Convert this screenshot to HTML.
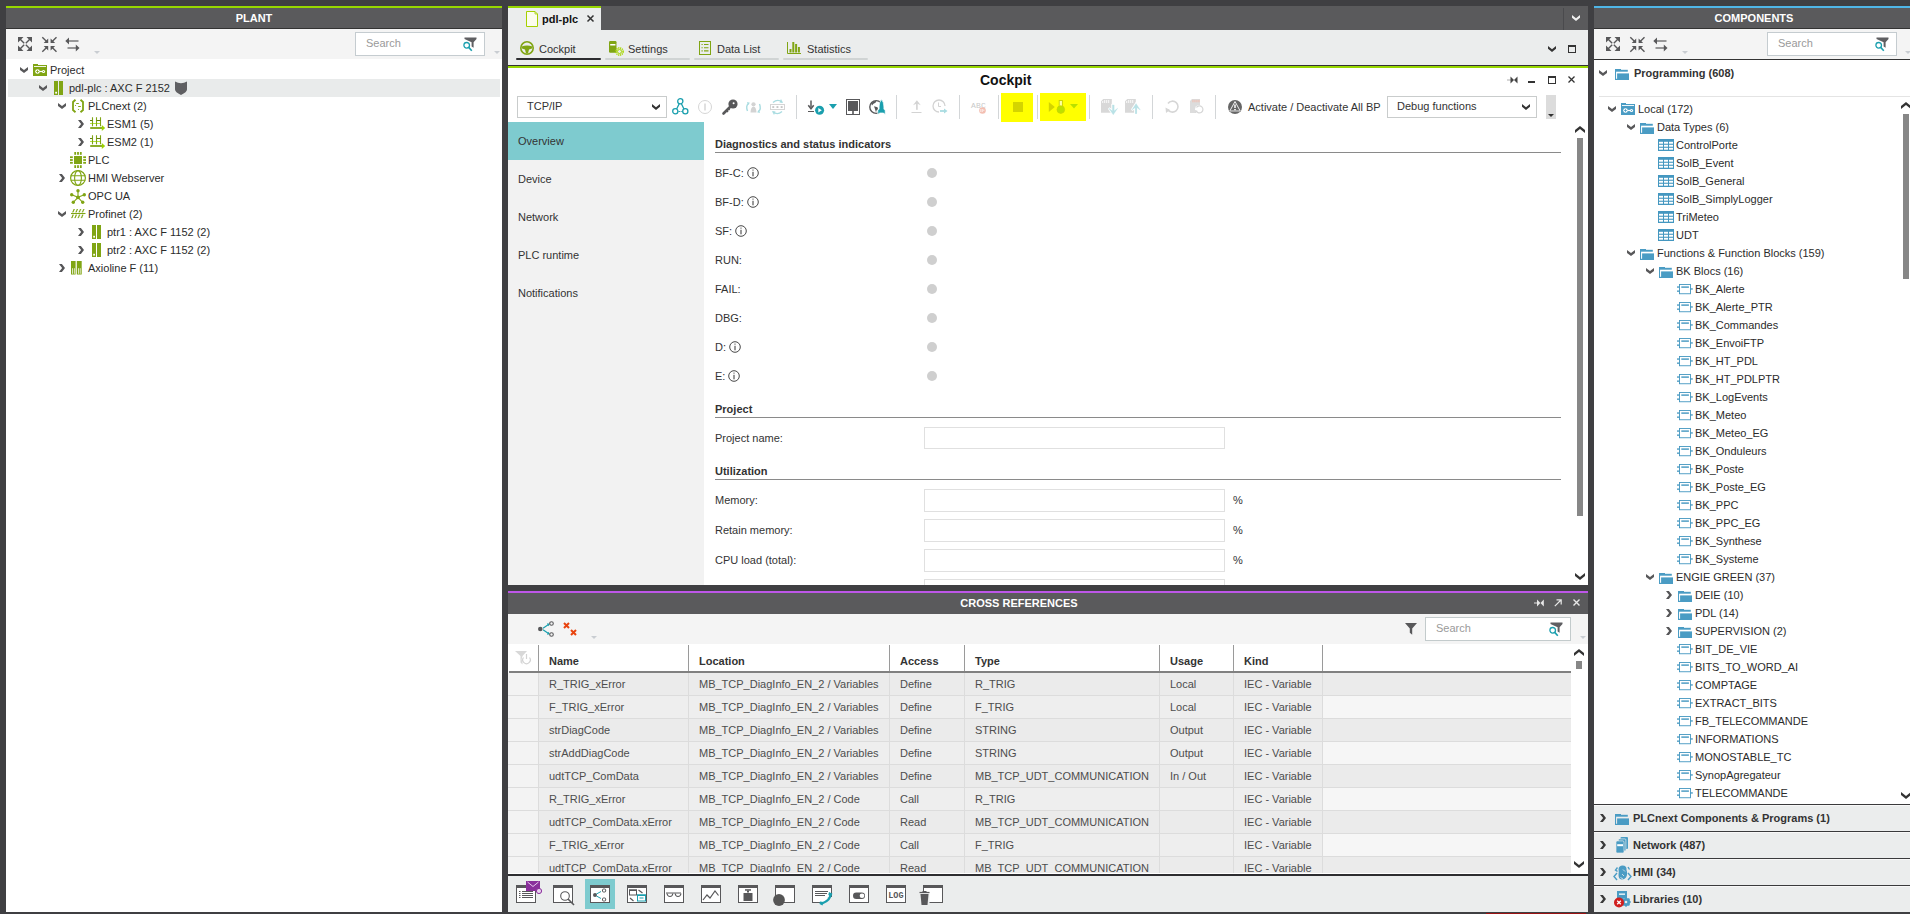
<!DOCTYPE html><html><head><meta charset="utf-8"><style>
*{box-sizing:border-box;margin:0;padding:0}
body{width:1910px;height:914px;overflow:hidden;background:#3f3f42;font-family:"Liberation Sans",sans-serif;font-size:11px;color:#2b2b2b;position:relative}
.abs{position:absolute}
.t{position:absolute;white-space:nowrap;line-height:14px}
.hdr{position:absolute;background:#5a5a5c;color:#fff;font-weight:bold;text-align:center;line-height:20px}
svg{position:absolute;overflow:visible}
</style></head><body>
<div class="abs" style="left:6px;top:6px;width:496px;height:2px;background:#97d700"></div>
<div class="hdr" style="left:6px;top:8px;width:496px;height:20px;padding-left:0px">PLANT</div>
<div class="abs" style="left:6px;top:28px;width:496px;height:1px;background:#333"></div>
<div class="abs" style="left:6px;top:29px;width:496px;height:30px;background:#f4f4f4"></div>
<svg style="left:18px;top:37px" width="14" height="14" viewBox="0 0 14 14"><path d="M0 0h5.5L0 5.5zM14 0v5.5L8.5 0zM0 14v-5.5L5.5 14zM14 14h-5.5L14 8.5z" fill="#58585a"/><path d="M2 2L6.2 6.2M12 2L7.8 6.2M2 12L6.2 7.8M12 12L7.8 7.8" stroke="#58585a" stroke-width="1.4"/></svg>
<svg style="left:41.5px;top:36.5px" width="15" height="15" viewBox="0 0 15 15"><path d="M6.2 1.6V6.1H1.7zM8.6 1.6V6.1H13.1zM6.2 13.4V8.9H1.7zM8.6 13.4V8.9H13.1z" fill="#58585a"/><path d="M0.3 0.3L4.6 4.6M14.5 0.3L10.2 4.6M0.3 14.7L4.6 10.4M14.5 14.7L10.2 10.4" stroke="#58585a" stroke-width="1.4"/></svg>
<svg style="left:65px;top:37px" width="14" height="15" viewBox="0 0 14 15"><path d="M0.3 4L4 0.5V7.5z" fill="#58585a"/><path d="M3.5 4H13.5" stroke="#58585a" stroke-width="1.2"/><path d="M14.5 11L10.8 7.5V14.5z" fill="#58585a"/><path d="M2.5 11H11" stroke="#58585a" stroke-width="1.2"/></svg>
<svg style="left:94px;top:51px" width="6" height="3" viewBox="0 0 6 3"><path d="M0 0H6L3 3z" fill="#c9cdd2"/></svg>
<div class="abs" style="left:6px;top:59px;width:496px;height:853px;background:#fff"></div>
<div class="abs" style="left:355px;top:32px;width:130px;height:24px;background:#fff;border:1px solid #c5ccd0"></div>
<div class="t" style="left:366px;top:36px;color:#9a9a9a">Search</div>
<svg style="left:464px;top:37px" width="13" height="14" viewBox="0 0 13 14"><path d="M0.5 0.6H12.5V2L9.6 5.2V10.8L7.6 9.4V5.2L0.5 2z" fill="#5f5f62"/><circle cx="2.7" cy="8.3" r="2.8" fill="#fff" fill-opacity="0.6" stroke="#1a9fae" stroke-width="1.3"/><path d="M4.7 10.4L7.8 13.8" stroke="#1a9fae" stroke-width="1.6"/></svg>
<svg style="left:494px;top:51px" width="6" height="3" viewBox="0 0 6 3"><path d="M0 0H6L3 3z" fill="#c9cdd2"/></svg>
<div class="abs" style="left:8px;top:79px;width:492px;height:18px;background:#e9ebeb"></div>
<div class="t" style="left:50px;top:63px;">Project</div>
<svg style="left:20px;top:67px" width="8" height="6" viewBox="0 0 8 6"><path d="M0 0L4.0 3L8 0V3L4.0 6L0 3z" fill="#58585a"/></svg>
<svg style="left:33px;top:64px" width="14" height="12" viewBox="0 0 14 12"><path d="M0 0H5V1H14V12H0z" fill="#80a514"/><rect x="1" y="2" width="12" height="0.9" fill="#fff"/><circle cx="4.5" cy="7.5" r="2.3" fill="#fff"/><path d="M3.2 7.5H5.8M4.5 6.2V8.8" stroke="#80a514" stroke-width="0.9"/><rect x="6.5" y="6.9" width="3" height="1.2" fill="#fff"/><circle cx="10.5" cy="7.5" r="1.6" fill="#fff"/><circle cx="10.5" cy="7.5" r="0.6" fill="#80a514"/></svg>
<div class="t" style="left:69px;top:81px;">pdl-plc : AXC F 2152</div>
<svg style="left:39px;top:85px" width="8" height="6" viewBox="0 0 8 6"><path d="M0 0L4.0 3L8 0V3L4.0 6L0 3z" fill="#58585a"/></svg>
<svg style="left:54px;top:81px" width="9" height="14" viewBox="0 0 9 14"><rect x="0" y="0" width="4" height="14" fill="#80a514"/><rect x="5" y="0" width="4" height="14" fill="#80a514"/><rect x="1.2" y="10.8" width="1.8" height="1.8" fill="#fff"/></svg>
<div class="t" style="left:88px;top:99px;">PLCnext (2)</div>
<svg style="left:58px;top:103px" width="8" height="6" viewBox="0 0 8 6"><path d="M0 0L4.0 3L8 0V3L4.0 6L0 3z" fill="#58585a"/></svg>
<svg style="left:72px;top:99px" width="12" height="14" viewBox="0 0 12 14"><path d="M3.5 0.8L1 3V11L3.5 13.2M8.5 0.8L11 3V11L8.5 13.2" fill="none" stroke="#80a514" stroke-width="1.8"/><path d="M4.2 4.5H6.8M6.2 7.5H8.8" stroke="#80a514" stroke-width="1"/><circle cx="3.5" cy="6.5" r="0.6" fill="#80a514"/><circle cx="6.5" cy="10.5" r="0.6" fill="#80a514"/></svg>
<div class="t" style="left:107px;top:117px;">ESM1 (5)</div>
<svg style="left:78px;top:120px" width="6" height="8" viewBox="0 0 6 8"><path d="M0 0H2.9L6 4.0L2.9 8H0L3.1 4.0z" fill="#555557"/></svg>
<svg style="left:90px;top:117px" width="15" height="14" viewBox="0 0 15 14"><path d="M0 6.5H10.5" stroke="#b5e53a" stroke-width="1"/><path d="M2.5 0.3V9.3M6.5 0.3V9.3M10.5 0.3V9.3" stroke="#80a514" stroke-width="1.1"/><path d="M0 3.5H2.5M6.5 3.5H10.5" stroke="#64800e" stroke-width="1"/><path d="M0.2 11H12" stroke="#80a514" stroke-width="1.8"/><path d="M11.8 8L15.2 11L11.8 14z" fill="#9bd000"/></svg>
<div class="t" style="left:107px;top:135px;">ESM2 (1)</div>
<svg style="left:78px;top:138px" width="6" height="8" viewBox="0 0 6 8"><path d="M0 0H2.9L6 4.0L2.9 8H0L3.1 4.0z" fill="#555557"/></svg>
<svg style="left:90px;top:135px" width="15" height="14" viewBox="0 0 15 14"><path d="M0 6.5H10.5" stroke="#b5e53a" stroke-width="1"/><path d="M2.5 0.3V9.3M6.5 0.3V9.3M10.5 0.3V9.3" stroke="#80a514" stroke-width="1.1"/><path d="M0 3.5H2.5M6.5 3.5H10.5" stroke="#64800e" stroke-width="1"/><path d="M0.2 11H12" stroke="#80a514" stroke-width="1.8"/><path d="M11.8 8L15.2 11L11.8 14z" fill="#9bd000"/></svg>
<div class="t" style="left:88px;top:153px;">PLC</div>
<svg style="left:70px;top:152px" width="16" height="16" viewBox="0 0 16 16"><rect x="4" y="4" width="8" height="8" fill="#80a514"/><rect x="4.3" y="0" width="1.8" height="2.8" fill="#80a514"/><rect x="4.3" y="13.2" width="1.8" height="2.8" fill="#80a514"/><rect x="0" y="4.3" width="2.8" height="1.8" fill="#80a514"/><rect x="13.2" y="4.3" width="2.8" height="1.8" fill="#80a514"/><rect x="7.1" y="0" width="1.8" height="2.8" fill="#80a514"/><rect x="7.1" y="13.2" width="1.8" height="2.8" fill="#80a514"/><rect x="0" y="7.1" width="2.8" height="1.8" fill="#80a514"/><rect x="13.2" y="7.1" width="2.8" height="1.8" fill="#80a514"/><rect x="9.9" y="0" width="1.8" height="2.8" fill="#80a514"/><rect x="9.9" y="13.2" width="1.8" height="2.8" fill="#80a514"/><rect x="0" y="9.9" width="2.8" height="1.8" fill="#80a514"/><rect x="13.2" y="9.9" width="2.8" height="1.8" fill="#80a514"/></svg>
<div class="t" style="left:88px;top:171px;">HMI Webserver</div>
<svg style="left:58.5px;top:174px" width="6" height="8" viewBox="0 0 6 8"><path d="M0 0H2.9L6 4.0L2.9 8H0L3.1 4.0z" fill="#555557"/></svg>
<svg style="left:70px;top:170px" width="16" height="16" viewBox="0 0 16 16"><circle cx="8" cy="8" r="7.4" fill="none" stroke="#80a514" stroke-width="1.2"/><ellipse cx="8" cy="8" rx="3.4" ry="7.4" fill="none" stroke="#80a514" stroke-width="1.1"/><path d="M0.8 5.8H15.2M0.8 10.2H15.2" stroke="#80a514" stroke-width="1.1"/></svg>
<div class="t" style="left:88px;top:189px;">OPC UA</div>
<svg style="left:70px;top:189px" width="16" height="15" viewBox="0 0 16 15"><path d="M8 8.3L8 1.8" stroke="#80a514" stroke-width="1.1"/><path d="M8 8.3L1.7 5.7" stroke="#80a514" stroke-width="1.1"/><path d="M8 8.3L14.3 5.7" stroke="#80a514" stroke-width="1.1"/><path d="M8 8.3L3.3 13.3" stroke="#80a514" stroke-width="1.1"/><path d="M8 8.3L12.7 13.3" stroke="#80a514" stroke-width="1.1"/><circle cx="8" cy="1.8" r="1.7" fill="#80a514"/><circle cx="1.7" cy="5.7" r="1.7" fill="#80a514"/><circle cx="14.3" cy="5.7" r="1.7" fill="#80a514"/><circle cx="3.3" cy="13.3" r="1.7" fill="#80a514"/><circle cx="12.7" cy="13.3" r="1.7" fill="#80a514"/><circle cx="8" cy="8.3" r="1.9" fill="#80a514"/></svg>
<div class="t" style="left:88px;top:207px;">Profinet (2)</div>
<svg style="left:58px;top:211px" width="8" height="6" viewBox="0 0 8 6"><path d="M0 0L4.0 3L8 0V3L4.0 6L0 3z" fill="#58585a"/></svg>
<svg style="left:71px;top:209px" width="15" height="9" viewBox="0 0 15 9"><path d="M0 4.5H14.5" stroke="#80a514" stroke-width="1.1"/><path d="M3.0 0.5L2.0 3" stroke="#80a514" stroke-width="1.1"/><path d="M2.0 6L1.0 8.7" stroke="#80a514" stroke-width="1.1"/><path d="M2.6 0.5H3.8M1.6 6H2.8M1.2 3H2.2M0.2 8.7H1.2" stroke="#80a514" stroke-width="0.8"/><path d="M6.2 0.5L5.2 3" stroke="#80a514" stroke-width="1.1"/><path d="M5.2 6L4.2 8.7" stroke="#80a514" stroke-width="1.1"/><path d="M5.800000000000001 0.5H7.0M4.800000000000001 6H6.0M4.4 3H5.4M3.4000000000000004 8.7H4.4" stroke="#80a514" stroke-width="0.8"/><path d="M9.4 0.5L8.4 3" stroke="#80a514" stroke-width="1.1"/><path d="M8.4 6L7.4 8.7" stroke="#80a514" stroke-width="1.1"/><path d="M9.0 0.5H10.2M8.0 6H9.2M7.6000000000000005 3H8.600000000000001M6.6000000000000005 8.7H7.6000000000000005" stroke="#80a514" stroke-width="0.8"/><path d="M12.600000000000001 0.5L11.600000000000001 3" stroke="#80a514" stroke-width="1.1"/><path d="M11.600000000000001 6L10.600000000000001 8.7" stroke="#80a514" stroke-width="1.1"/><path d="M12.200000000000001 0.5H13.400000000000002M11.200000000000001 6H12.400000000000002M10.8 3H11.8M9.8 8.7H10.8" stroke="#80a514" stroke-width="0.8"/></svg>
<div class="t" style="left:107px;top:225px;">ptr1 : AXC F 1152 (2)</div>
<svg style="left:78px;top:228px" width="6" height="8" viewBox="0 0 6 8"><path d="M0 0H2.9L6 4.0L2.9 8H0L3.1 4.0z" fill="#555557"/></svg>
<svg style="left:92px;top:225px" width="9" height="14" viewBox="0 0 9 14"><rect x="0" y="0" width="4" height="14" fill="#80a514"/><rect x="5" y="0" width="4" height="14" fill="#80a514"/><rect x="1.2" y="10.8" width="1.8" height="1.8" fill="#fff"/></svg>
<div class="t" style="left:107px;top:243px;">ptr2 : AXC F 1152 (2)</div>
<svg style="left:78px;top:246px" width="6" height="8" viewBox="0 0 6 8"><path d="M0 0H2.9L6 4.0L2.9 8H0L3.1 4.0z" fill="#555557"/></svg>
<svg style="left:92px;top:243px" width="9" height="14" viewBox="0 0 9 14"><rect x="0" y="0" width="4" height="14" fill="#80a514"/><rect x="5" y="0" width="4" height="14" fill="#80a514"/><rect x="1.2" y="10.8" width="1.8" height="1.8" fill="#fff"/></svg>
<div class="t" style="left:88px;top:261px;">Axioline F (11)</div>
<svg style="left:58.5px;top:264px" width="6" height="8" viewBox="0 0 6 8"><path d="M0 0H2.9L6 4.0L2.9 8H0L3.1 4.0z" fill="#555557"/></svg>
<svg style="left:71px;top:261px" width="11" height="14" viewBox="0 0 11 14"><rect x="0" y="0" width="4.6" height="13.5" fill="#80a514"/><rect x="5.8" y="0" width="4.9" height="13.5" fill="#80a514"/><rect x="1.2" y="7.2" width="0.75" height="5.6" fill="#fff"/><rect x="2.9" y="7.2" width="0.75" height="5.6" fill="#fff"/><rect x="7.0" y="7.2" width="0.75" height="5.6" fill="#fff"/><rect x="8.8" y="7.2" width="0.75" height="5.6" fill="#fff"/></svg>
<svg style="left:175px;top:81px" width="12" height="14" viewBox="0 0 12 14"><path d="M0 0.5Q6 4 12 0.5V8.5Q12 11 6 14Q0 11 0 8.5z" fill="#5f5f62"/></svg>
<div class="abs" style="left:508px;top:6px;width:1080px;height:24px;background:#5a5a5c"></div>
<div class="abs" style="left:508px;top:6px;width:93px;height:2px;background:#97d700"></div>
<div class="abs" style="left:508px;top:8px;width:93px;height:22px;background:#ebeded"></div>
<div class="t" style="left:542px;top:12px;font-weight:bold;color:#111">pdl-plc</div>
<svg style="left:526px;top:11px" width="12" height="16" viewBox="0 0 12 16"><path d="M0.5 0.5H9L11.5 3V15.5H0.5z" fill="#fbfcee" stroke="#a5d000" stroke-width="1"/><path d="M9 0.5V3H11.5" fill="none" stroke="#a5d000" stroke-width="0.8"/></svg>
<svg style="left:587px;top:15px" width="7" height="7" viewBox="0 0 7 7"><path d="M0.5 0.5L6.5 6.5M6.5 0.5L0.5 6.5" stroke="#333" stroke-width="1.5"/></svg>
<div class="abs" style="left:1563px;top:8px;width:1px;height:22px;background:#4a4a4d"></div>
<svg style="left:1572px;top:15px" width="8" height="6" viewBox="0 0 8 6"><path d="M0 0L4.0 3.2L8 0V2.8L4.0 6L0 2.8z" fill="#f0f0f0"/></svg>
<div class="abs" style="left:508px;top:30px;width:1080px;height:35px;background:#ebeded"></div>
<div class="abs" style="left:508px;top:65px;width:1080px;height:1px;background:#333"></div>
<div class="abs" style="left:508px;top:66px;width:1080px;height:2px;background:#97d700"></div>
<div class="t" style="left:539px;top:42px;color:#333">Cockpit</div>
<div class="t" style="left:628px;top:42px;color:#333">Settings</div>
<div class="t" style="left:717px;top:42px;color:#333">Data List</div>
<div class="t" style="left:807px;top:42px;color:#333">Statistics</div>
<div class="abs" style="left:516px;top:58px;width:85px;height:2px;background:#2d2d30;border-radius:1px"></div>
<div class="abs" style="left:605px;top:58px;width:85px;height:2px;background:#d0d4d4;border-radius:1px"></div>
<div class="abs" style="left:694px;top:58px;width:85px;height:2px;background:#d0d4d4;border-radius:1px"></div>
<div class="abs" style="left:783px;top:58px;width:85px;height:2px;background:#d0d4d4;border-radius:1px"></div>
<svg style="left:520px;top:41px" width="14" height="14" viewBox="0 0 14 14"><circle cx="7" cy="7" r="6.2" fill="none" stroke="#80a514" stroke-width="1.6"/><path d="M1.5 5.5Q7 3.5 12.5 5.5L12 7.5L9 8.5L8 12.5H6L5 8.5L2 7.5z" fill="#80a514"/></svg>
<svg style="left:609px;top:41px" width="15" height="15" viewBox="0 0 15 15"><rect x="0" y="0" width="7.5" height="11.7" rx="1.2" fill="#80a514"/><rect x="1.2" y="3" width="5.2" height="1.5" fill="#fff"/><circle cx="10.5" cy="10.5" r="3.6" fill="none" stroke="#a6d700" stroke-width="1.6" stroke-dasharray="1.2 0.7"/><circle cx="10.5" cy="10.5" r="2" fill="#ebeded" stroke="#a6d700" stroke-width="1"/></svg>
<svg style="left:699px;top:41px" width="12" height="14" viewBox="0 0 12 14"><rect x="0.5" y="0.5" width="11" height="13" fill="none" stroke="#80a514" stroke-width="1"/><path d="M2.5 3.5H3.7M2.5 6.7H3.7M2.5 9.9H3.7M5 3.5H9.5M5 6.7H9.5M5 9.9H9.5" stroke="#80a514" stroke-width="1.1"/></svg>
<svg style="left:787px;top:42px" width="14" height="12" viewBox="0 0 14 12"><path d="M0.5 0V11.5H14" fill="none" stroke="#80a514" stroke-width="1"/><rect x="2.5" y="7" width="2" height="3.5" fill="#80a514"/><rect x="5.3" y="0" width="2" height="10.5" fill="#80a514"/><rect x="8.1" y="2" width="2" height="8.5" fill="#80a514"/><rect x="10.9" y="5" width="2" height="5.5" fill="#80a514"/></svg>
<svg style="left:1548px;top:46px" width="8" height="6" viewBox="0 0 8 6"><path d="M0 0L4.0 3.2L8 0V2.8L4.0 6L0 2.8z" fill="#333"/></svg>
<svg style="left:1568px;top:45px" width="8" height="8" viewBox="0 0 8 8"><rect x="0.5" y="0.5" width="7" height="7" fill="none" stroke="#333" stroke-width="1"/><rect x="0" y="0" width="8" height="2" fill="#333"/></svg>
<div class="abs" style="left:508px;top:68px;width:1080px;height:517px;background:#fff"></div>
<div class="t" style="left:980px;top:72px;font-size:14px;font-weight:bold;color:#111;line-height:16px">Cockpit</div>
<svg style="left:1507px;top:76px" width="11" height="8" viewBox="0 0 11 8"><path d="M0 4H5" stroke="#bbb" stroke-width="1.2"/><path d="M3.5 0.5L7 4L3.5 7.5z" fill="#444"/><path d="M10.5 0.5L7 4L10.5 7.5z" fill="#444"/></svg>
<div class="abs" style="left:1528px;top:81px;width:7px;height:2px;background:#333"></div>
<svg style="left:1548px;top:76px" width="8" height="8" viewBox="0 0 8 8"><rect x="0.5" y="0.5" width="7" height="7" fill="none" stroke="#333" stroke-width="1"/><rect x="0" y="0" width="8" height="2" fill="#333"/></svg>
<svg style="left:1568px;top:76px" width="7" height="7" viewBox="0 0 7 7"><path d="M0.5 0.5L6.5 6.5M6.5 0.5L0.5 6.5" stroke="#333" stroke-width="1.3"/></svg>
<div class="abs" style="left:517px;top:96px;width:150px;height:22px;background:#fff;border:1px solid #c9cccc"></div>
<div class="t" style="left:527px;top:99px;color:#333">TCP/IP</div>
<svg style="left:652px;top:104px" width="8" height="6" viewBox="0 0 8 6"><path d="M0 0L4.0 3.2L8 0V2.8L4.0 6L0 2.8z" fill="#333"/></svg>
<svg style="left:672px;top:98px" width="17" height="17" viewBox="0 0 17 17"><path d="M8.3 3.5L3.8 12.8M8.3 3.5L12.8 12.8" stroke="#1a9fae" stroke-width="1.3"/><path d="M5.5 13.5H11" stroke="#1a9fae" stroke-width="1" stroke-dasharray="1 0.6"/><circle cx="8.3" cy="3.2" r="2.6" fill="#fff" stroke="#1a9fae" stroke-width="1.3"/><circle cx="3.3" cy="13.3" r="2.6" fill="#fff" stroke="#1a9fae" stroke-width="1.3"/><circle cx="13.3" cy="13.3" r="2.6" fill="#fff" stroke="#1a9fae" stroke-width="1.3"/></svg>
<svg style="left:698px;top:100px" width="14" height="14" viewBox="0 0 14 14"><circle cx="7" cy="7" r="6.5" fill="none" stroke="#d6d6d6" stroke-width="1"/><path d="M7 3.5V10.5" stroke="#d0d0d0" stroke-width="1.3"/></svg>
<svg style="left:722px;top:99px" width="16" height="16" viewBox="0 0 16 16"><circle cx="11" cy="5" r="4.6" fill="#58585a"/><circle cx="11.6" cy="4.2" r="1" fill="#fff"/><path d="M8.5 7.5L1.5 14.5" stroke="#58585a" stroke-width="2.6" stroke-linecap="round"/><path d="M4.5 11.5L6 13M6.3 9.7L7.6 11" stroke="#58585a" stroke-width="1.6"/></svg>
<svg style="left:745px;top:102px" width="17" height="11" viewBox="0 0 17 11"><circle cx="8.5" cy="2.3" r="2.1" fill="#d3d3d3"/><path d="M5.5 10.5Q5.8 4.8 8.5 4.8Q11.2 4.8 11.5 10.5z" fill="#d3d3d3"/><path d="M3.5 1.5Q0.5 4 2.5 9" fill="none" stroke="#a9dce1" stroke-width="1.4"/><path d="M2 0L5 0.8L3 3z" fill="#a9dce1"/><path d="M13.5 9.5Q16.5 7 14.5 2" fill="none" stroke="#a9dce1" stroke-width="1.4"/><path d="M15 11L12 10.2L14 8z" fill="#a9dce1"/></svg>
<svg style="left:770px;top:99px" width="15" height="16" viewBox="0 0 15 16"><path d="M3 3.5Q7.5 -0.5 12 3" fill="none" stroke="#a9dce1" stroke-width="1.4"/><path d="M11 0L13 4L9.5 3.5z" fill="#a9dce1"/><path d="M12 12.5Q7.5 16.5 3 13" fill="none" stroke="#a9dce1" stroke-width="1.4"/><path d="M4 16L2 12L5.5 12.5z" fill="#a9dce1"/><rect x="0.5" y="5.5" width="14" height="5" fill="#fff" stroke="#d5d5d5" stroke-width="1"/><rect x="2.3" y="7.1" width="1.9" height="1.9" fill="#c6c6c6"/><rect x="6.5" y="7.1" width="1.9" height="1.9" fill="#c6c6c6"/><rect x="10.7" y="7.1" width="1.9" height="1.9" fill="#c6c6c6"/></svg>
<div class="abs" style="left:796px;top:95px;width:1px;height:24px;background:#d3d6d8"></div>
<div class="abs" style="left:896px;top:95px;width:1px;height:24px;background:#d3d6d8"></div>
<div class="abs" style="left:959px;top:95px;width:1px;height:24px;background:#d3d6d8"></div>
<div class="abs" style="left:998px;top:95px;width:1px;height:24px;background:#d3d6d8"></div>
<div class="abs" style="left:1037px;top:95px;width:1px;height:24px;background:#d3d6d8"></div>
<div class="abs" style="left:1089px;top:95px;width:1px;height:24px;background:#d3d6d8"></div>
<div class="abs" style="left:1152px;top:95px;width:1px;height:24px;background:#d3d6d8"></div>
<div class="abs" style="left:1215px;top:95px;width:1px;height:24px;background:#d3d6d8"></div>
<svg style="left:808px;top:100px" width="17" height="15" viewBox="0 0 17 15"><path d="M3 0.5V7" stroke="#58585a" stroke-width="1.5"/><path d="M0.3 5.2L3 8.8L5.7 5.2" fill="none" stroke="#58585a" stroke-width="1.5"/><path d="M0 11.5H6" stroke="#58585a" stroke-width="1"/><circle cx="11.6" cy="10.3" r="4.5" fill="#1a9fae"/><path d="M10.3 8V12.6L13.8 10.3z" fill="#fff"/></svg>
<svg style="left:829px;top:104px" width="8" height="5" viewBox="0 0 8 5"><path d="M0 0H8L4.0 5z" fill="#1a9fae"/></svg>
<svg style="left:846px;top:99px" width="14" height="16" viewBox="0 0 14 16"><rect x="0.5" y="0.5" width="13" height="15" fill="#fff" stroke="#58585a" stroke-width="1"/><rect x="2" y="2" width="10" height="10" fill="#58585a"/><rect x="6.2" y="12" width="1.6" height="3.5" fill="#58585a"/></svg>
<svg style="left:869px;top:99px" width="17" height="16" viewBox="0 0 17 16"><circle cx="7.2" cy="8" r="6.4" fill="none" stroke="#58585a" stroke-width="1.4"/><path d="M2.2 4.5Q4 1.8 7.5 1.8L6.5 3.8L4.5 4.8L3 6.5z" fill="#58585a"/><path d="M5 7.2L8.5 8.2L9 10L7.5 11.5L7 13.5L6 10z" fill="#58585a"/><path d="M12.5 0.6Q14.9 3 14.9 8V10L16.2 11.6V15.6L14.6 14H10.4L8.8 15.6V11.6L10.1 10V8Q10.1 3 12.5 0.6z" fill="#1a9fae" stroke="#fff" stroke-width="0.7"/></svg>
<svg style="left:912px;top:100px" width="10" height="13" viewBox="0 0 10 13"><path d="M1 5.2L4.9 0.2L8.8 5.2L4.9 3.6z" fill="#d3d3d3"/><rect x="4.1" y="2.5" width="1.6" height="7.3" fill="#d3d3d3"/><rect x="-0.5" y="12" width="10" height="1" fill="#d3d3d3"/></svg>
<svg style="left:932px;top:99px" width="16" height="15" viewBox="0 0 16 15"><path d="M13 7A6 6 0 1 0 7 13" fill="none" stroke="#d3d3d3" stroke-width="1.3"/><path d="M6.5 3.5V7.5H9" fill="none" stroke="#d3d3d3" stroke-width="1"/><path d="M8 12H13" stroke="#a9dce1" stroke-width="1.8"/><path d="M12 9.5L15.5 12L12 14.5z" fill="#a9dce1"/></svg>
<svg style="left:971px;top:100px" width="16" height="14" viewBox="0 0 16 14"><text x="0" y="7.5" font-family="Liberation Mono" font-size="8" fill="#c9c9c9" letter-spacing="0.2">ABC</text><circle cx="11.5" cy="10.5" r="3.3" fill="#f3bfb2"/><path d="M9.8 9V12M11.3 9V12M12.8 9.5V11" stroke="#fff" stroke-width="0.7"/></svg>
<div class="abs" style="left:1001px;top:93px;width:32px;height:29px;background:#ffff00"></div>
<div class="abs" style="left:1013px;top:102px;width:10px;height:10px;background:#d4d400"></div>
<div class="abs" style="left:1040px;top:93px;width:46px;height:28px;background:#ffff00"></div>
<svg style="left:1048px;top:100px" width="31" height="14" viewBox="0 0 31 14"><path d="M0.8 2V12L6.8 7z" fill="#d4d400"/><rect x="11.2" y="0.5" width="3.2" height="6" fill="#ffffa0" stroke="#c8d000" stroke-width="0.9"/><circle cx="12.8" cy="9.6" r="3.8" fill="#bde000" stroke="#c8d400" stroke-width="0.8"/><path d="M22 4H30L26 8.5z" fill="#b8e000"/></svg>
<svg style="left:1101px;top:99px" width="17" height="16" viewBox="0 0 17 16"><path d="M2.3 0H10.8V13.8H0V2.3z" fill="#d8d8d8"/><rect x="1.3" y="2" width="0.9" height="2" fill="#fff"/><rect x="3.3" y="1" width="0.9" height="3" fill="#fff"/><rect x="5.3" y="1" width="0.9" height="3" fill="#fff"/><rect x="7.3" y="1" width="0.9" height="3" fill="#fff"/><rect x="11.4" y="6" width="1.7" height="7.5" fill="#fff" stroke="#fff" stroke-width="2.2"/><path d="M7.8 9.2L12.25 15.8L16.7 9.2L12.25 12.6z" fill="#fff" stroke="#fff" stroke-width="2.2"/><rect x="11.4" y="6" width="1.7" height="7.5" fill="#b9e2e6" stroke="#b9e2e6" stroke-width="0.3"/><path d="M7.8 9.2L12.25 15.8L16.7 9.2L12.25 12.6z" fill="#b9e2e6" stroke="#b9e2e6" stroke-width="0.3"/></svg>
<svg style="left:1125px;top:99px" width="17" height="16" viewBox="0 0 17 16"><path d="M2.3 0H10.8V13.8H0V2.3z" fill="#d8d8d8"/><rect x="1.3" y="2" width="0.9" height="2" fill="#fff"/><rect x="3.3" y="1" width="0.9" height="3" fill="#fff"/><rect x="5.3" y="1" width="0.9" height="3" fill="#fff"/><rect x="7.3" y="1" width="0.9" height="3" fill="#fff"/><rect x="10.2" y="7.5" width="1.7" height="7.3" fill="#fff" stroke="#fff" stroke-width="2.2"/><path d="M6.8 11L11.05 4.6L15.3 11L11.05 8z" fill="#fff" stroke="#fff" stroke-width="2.2"/><rect x="10.2" y="7.5" width="1.7" height="7.3" fill="#b9e2e6" stroke="#b9e2e6" stroke-width="0.3"/><path d="M6.8 11L11.05 4.6L15.3 11L11.05 8z" fill="#b9e2e6" stroke="#b9e2e6" stroke-width="0.3"/></svg>
<svg style="left:1165px;top:100px" width="14" height="14" viewBox="0 0 14 14"><path d="M2.8 9.5A5.5 5.5 0 1 0 3 3.5" fill="none" stroke="#d6d6d6" stroke-width="1.6"/><path d="M0.5 7.5L1 13L5 10z" fill="#d6d6d6"/></svg>
<svg style="left:1190px;top:99px" width="14" height="15" viewBox="0 0 14 15"><path d="M2 0H10V14H0V2z" fill="#dcdcdc"/><rect x="2.5" y="0.8" width="0.9" height="2.5" fill="#f4b8a8"/><rect x="4.5" y="0.8" width="0.9" height="2.5" fill="#f4b8a8"/><rect x="6.5" y="0.8" width="0.9" height="2.5" fill="#f4b8a8"/><rect x="8.5" y="0.8" width="0.9" height="2.5" fill="#f4b8a8"/><circle cx="9.5" cy="10.5" r="4.5" fill="#fff"/><path d="M6.3 12A3.5 3.5 0 1 0 6.5 8.5" fill="none" stroke="#d6d6d6" stroke-width="1.2"/><path d="M5 11L5.3 14L7.8 12z" fill="#d6d6d6"/></svg>
<svg style="left:1228px;top:100px" width="14" height="14" viewBox="0 0 14 14"><circle cx="7" cy="7" r="7" fill="#666"/><path d="M7 1.5L1.8 11H12.2z" fill="none" stroke="#fff" stroke-width="0.9"/><path d="M7 4.5V8" stroke="#fff" stroke-width="1.5"/><rect x="6.2" y="9" width="1.6" height="1.3" fill="#fff"/><path d="M1 11.3H13" stroke="#a0a0a0" stroke-width="1"/></svg>
<div class="t" style="left:1248px;top:100px;color:#333">Activate / Deactivate All BP</div>
<div class="abs" style="left:1387px;top:96px;width:150px;height:22px;background:#fff;border:1px solid #c9cccc"></div>
<div class="t" style="left:1397px;top:99px;color:#333">Debug functions</div>
<svg style="left:1522px;top:104px" width="8" height="6" viewBox="0 0 8 6"><path d="M0 0L4.0 3.2L8 0V2.8L4.0 6L0 2.8z" fill="#333"/></svg>
<div class="abs" style="left:1546px;top:95px;width:10px;height:24px;background:#dcdcdc"></div>
<svg style="left:1548px;top:114px" width="6" height="3" viewBox="0 0 6 3"><path d="M0 0H6L3.0 3z" fill="#333"/></svg>
<div class="abs" style="left:508px;top:122px;width:196px;height:463px;background:#f2f2f2"></div>
<div class="abs" style="left:508px;top:122px;width:196px;height:38px;background:#7ecbcf"></div>
<div class="t" style="left:518px;top:134px;color:#333">Overview</div>
<div class="t" style="left:518px;top:172px;color:#333">Device</div>
<div class="t" style="left:518px;top:210px;color:#333">Network</div>
<div class="t" style="left:518px;top:248px;color:#333">PLC runtime</div>
<div class="t" style="left:518px;top:286px;color:#333">Notifications</div>
<div class="t" style="left:715px;top:137px;font-weight:bold;color:#333">Diagnostics and status indicators</div>
<div class="abs" style="left:715px;top:152px;width:846px;height:1px;background:#8a8a8a"></div>
<div class="t" style="left:715px;top:166px;color:#333">BF-C:</div>
<svg style="left:747px;top:167px" width="12" height="12" viewBox="0 0 12 12"><circle cx="6" cy="6" r="5.3" fill="none" stroke="#333" stroke-width="0.9"/><path d="M6 4.8V9.3" stroke="#333" stroke-width="1"/><rect x="5.5" y="2.6" width="1" height="1" fill="#333"/></svg>
<div class="abs" style="left:927px;top:168px;width:10px;height:10px;background:#cfcfcf;border-radius:50%"></div>
<div class="t" style="left:715px;top:195px;color:#333">BF-D:</div>
<svg style="left:747px;top:196px" width="12" height="12" viewBox="0 0 12 12"><circle cx="6" cy="6" r="5.3" fill="none" stroke="#333" stroke-width="0.9"/><path d="M6 4.8V9.3" stroke="#333" stroke-width="1"/><rect x="5.5" y="2.6" width="1" height="1" fill="#333"/></svg>
<div class="abs" style="left:927px;top:197px;width:10px;height:10px;background:#cfcfcf;border-radius:50%"></div>
<div class="t" style="left:715px;top:224px;color:#333">SF:</div>
<svg style="left:735px;top:225px" width="12" height="12" viewBox="0 0 12 12"><circle cx="6" cy="6" r="5.3" fill="none" stroke="#333" stroke-width="0.9"/><path d="M6 4.8V9.3" stroke="#333" stroke-width="1"/><rect x="5.5" y="2.6" width="1" height="1" fill="#333"/></svg>
<div class="abs" style="left:927px;top:226px;width:10px;height:10px;background:#cfcfcf;border-radius:50%"></div>
<div class="t" style="left:715px;top:253px;color:#333">RUN:</div>
<div class="abs" style="left:927px;top:255px;width:10px;height:10px;background:#cfcfcf;border-radius:50%"></div>
<div class="t" style="left:715px;top:282px;color:#333">FAIL:</div>
<div class="abs" style="left:927px;top:284px;width:10px;height:10px;background:#cfcfcf;border-radius:50%"></div>
<div class="t" style="left:715px;top:311px;color:#333">DBG:</div>
<div class="abs" style="left:927px;top:313px;width:10px;height:10px;background:#cfcfcf;border-radius:50%"></div>
<div class="t" style="left:715px;top:340px;color:#333">D:</div>
<svg style="left:729px;top:341px" width="12" height="12" viewBox="0 0 12 12"><circle cx="6" cy="6" r="5.3" fill="none" stroke="#333" stroke-width="0.9"/><path d="M6 4.8V9.3" stroke="#333" stroke-width="1"/><rect x="5.5" y="2.6" width="1" height="1" fill="#333"/></svg>
<div class="abs" style="left:927px;top:342px;width:10px;height:10px;background:#cfcfcf;border-radius:50%"></div>
<div class="t" style="left:715px;top:369px;color:#333">E:</div>
<svg style="left:728px;top:370px" width="12" height="12" viewBox="0 0 12 12"><circle cx="6" cy="6" r="5.3" fill="none" stroke="#333" stroke-width="0.9"/><path d="M6 4.8V9.3" stroke="#333" stroke-width="1"/><rect x="5.5" y="2.6" width="1" height="1" fill="#333"/></svg>
<div class="abs" style="left:927px;top:371px;width:10px;height:10px;background:#cfcfcf;border-radius:50%"></div>
<div class="t" style="left:715px;top:402px;font-weight:bold;color:#333">Project</div>
<div class="abs" style="left:715px;top:417px;width:846px;height:1px;background:#8a8a8a"></div>
<div class="t" style="left:715px;top:431px;color:#333">Project name:</div>
<div class="abs" style="left:924px;top:427px;width:301px;height:22px;border:1px solid #e0e0e0"></div>
<div class="t" style="left:715px;top:464px;font-weight:bold;color:#333">Utilization</div>
<div class="abs" style="left:715px;top:479px;width:846px;height:1px;background:#8a8a8a"></div>
<div class="t" style="left:715px;top:493px;color:#333">Memory:</div>
<div class="abs" style="left:924px;top:489px;width:301px;height:23px;border:1px solid #e0e0e0"></div>
<div class="t" style="left:1233px;top:493px;color:#333">%</div>
<div class="t" style="left:715px;top:523px;color:#333">Retain memory:</div>
<div class="abs" style="left:924px;top:519px;width:301px;height:23px;border:1px solid #e0e0e0"></div>
<div class="t" style="left:1233px;top:523px;color:#333">%</div>
<div class="t" style="left:715px;top:553px;color:#333">CPU load (total):</div>
<div class="abs" style="left:924px;top:549px;width:301px;height:23px;border:1px solid #e0e0e0"></div>
<div class="t" style="left:1233px;top:553px;color:#333">%</div>
<div class="abs" style="left:924px;top:579px;width:301px;height:6px;border:1px solid #e0e0e0;border-bottom:none"></div>
<svg style="left:1575px;top:126px" width="10" height="7" viewBox="0 0 10 7"><path d="M0 7L5.0 3L10 7V4L5.0 0L0 4z" fill="#333"/></svg>
<div class="abs" style="left:1577px;top:138px;width:6px;height:378px;background:#878787"></div>
<svg style="left:1575px;top:573px" width="10" height="7" viewBox="0 0 10 7"><path d="M0 0L5.0 4L10 0V3L5.0 7L0 3z" fill="#333"/></svg>
<div class="abs" style="left:508px;top:591px;width:1080px;height:2px;background:#bd56e8"></div>
<div class="abs" style="left:508px;top:593px;width:1080px;height:21px;background:#5a5a5c"></div>
<div class="hdr" style="left:508px;top:593px;width:1022px;height:21px">CROSS REFERENCES</div>
<svg style="left:1534px;top:599px" width="10" height="8" viewBox="0 0 10 8"><path d="M0 4H4.5" stroke="#ccc" stroke-width="1.2"/><path d="M3 0.5L6.3 4L3 7.5z" fill="#e8e8e8"/><path d="M9.8 0.5L6.5 4L9.8 7.5z" fill="#e8e8e8"/></svg>
<svg style="left:1554px;top:599px" width="8" height="8" viewBox="0 0 8 8"><path d="M0.8 7.2L7 1M2.5 0.8H7.2V5.5" fill="none" stroke="#e8e8e8" stroke-width="1.2"/></svg>
<svg style="left:1573px;top:599px" width="7" height="7" viewBox="0 0 7 7"><path d="M0.5 0.5L6.5 6.5M6.5 0.5L0.5 6.5" stroke="#e8e8e8" stroke-width="1.4"/></svg>
<div class="abs" style="left:508px;top:614px;width:1080px;height:30px;background:#f4f4f4"></div>
<svg style="left:538px;top:621px" width="16" height="16" viewBox="0 0 16 16"><path d="M5 7.2L10.5 3.5M5 8.8L10.5 12.5" stroke="#1a9fae" stroke-width="1.2"/><path d="M9 2.3L12 2.8L10.3 5.2zM9 13.7L12 13.2L10.3 10.8z" fill="#1a9fae"/><circle cx="2.3" cy="8" r="2.3" fill="#58585a"/><circle cx="13.5" cy="2.5" r="1.8" fill="none" stroke="#58585a" stroke-width="1.1"/><circle cx="13.5" cy="13.5" r="1.8" fill="none" stroke="#58585a" stroke-width="1.1"/></svg>
<svg style="left:563px;top:622px" width="14" height="14" viewBox="0 0 14 14"><path d="M1 1L6 6M6 1L1 6M8 8L13 13M13 8L8 13" stroke="#e8430e" stroke-width="2"/></svg>
<svg style="left:591px;top:636px" width="6" height="3" viewBox="0 0 6 3"><path d="M0 0H6L3 3z" fill="#c9cdd2"/></svg>
<svg style="left:1405px;top:623px" width="12" height="12" viewBox="0 0 12 12"><path d="M0 0H12L7.2 5.5V11.8L4.8 9.8V5.5z" fill="#58585a"/></svg>
<div class="abs" style="left:1425px;top:617px;width:146px;height:24px;background:#fff;border:1px solid #c3cbcc"></div>
<div class="t" style="left:1436px;top:621px;color:#9a9a9a">Search</div>
<svg style="left:1550px;top:622px" width="13" height="14" viewBox="0 0 13 14"><path d="M0.5 0.6H12.5V2L9.6 5.2V10.8L7.6 9.4V5.2L0.5 2z" fill="#5f5f62"/><circle cx="2.7" cy="8.3" r="2.8" fill="#fff" fill-opacity="0.6" stroke="#1a9fae" stroke-width="1.3"/><path d="M4.7 10.4L7.8 13.8" stroke="#1a9fae" stroke-width="1.6"/></svg>
<svg style="left:1580px;top:636px" width="6" height="3" viewBox="0 0 6 3"><path d="M0 0H6L3 3z" fill="#c9cdd2"/></svg>
<div class="abs" style="left:508px;top:644px;width:1080px;height:230px;background:#fff"></div>
<div class="t" style="left:549px;top:654px;font-weight:bold;color:#333">Name</div>
<div class="t" style="left:699px;top:654px;font-weight:bold;color:#333">Location</div>
<div class="t" style="left:900px;top:654px;font-weight:bold;color:#333">Access</div>
<div class="t" style="left:975px;top:654px;font-weight:bold;color:#333">Type</div>
<div class="t" style="left:1170px;top:654px;font-weight:bold;color:#333">Usage</div>
<div class="t" style="left:1244px;top:654px;font-weight:bold;color:#333">Kind</div>
<div class="abs" style="left:538px;top:645px;width:1px;height:27px;background:#9a9a9a"></div>
<div class="abs" style="left:688px;top:645px;width:1px;height:27px;background:#9a9a9a"></div>
<div class="abs" style="left:889px;top:645px;width:1px;height:27px;background:#9a9a9a"></div>
<div class="abs" style="left:964px;top:645px;width:1px;height:27px;background:#9a9a9a"></div>
<div class="abs" style="left:1159px;top:645px;width:1px;height:27px;background:#9a9a9a"></div>
<div class="abs" style="left:1233px;top:645px;width:1px;height:27px;background:#9a9a9a"></div>
<div class="abs" style="left:1322px;top:645px;width:1px;height:27px;background:#9a9a9a"></div>
<svg style="left:515px;top:651px" width="17" height="15" viewBox="0 0 17 15"><path d="M0 0H12L7.5 5V13.5L5.5 11.5V5z" fill="#d8d8d8"/><circle cx="11.5" cy="8.5" r="4.8" fill="#fff"/><path d="M8.5 6.5A3.8 3.8 0 1 0 14.5 6.5" fill="none" stroke="#d3d3d3" stroke-width="1.2"/><path d="M11.5 3V8" stroke="#d3d3d3" stroke-width="1.2"/></svg>
<div class="abs" style="left:509px;top:671px;width:1062px;height:2px;background:#808080"></div>
<div class="abs" style="left:508px;top:673px;width:1063px;height:200px;overflow:hidden">
<div class="abs" style="left:0;top:0px;width:1063px;height:23px;background:#ebebeb;border-bottom:1px solid #dcdcdc"></div>
<div class="abs" style="left:0;top:0px;width:814px;height:23px;background:#ebebeb;border-bottom:1px solid #dcdcdc"></div>
<div class="abs" style="left:0;top:0px;width:30px;height:23px;background:#f3f3f3;border-bottom:1px solid #dcdcdc"></div>
<div class="abs" style="left:30px;top:0px;width:1px;height:23px;background:#dcdcdc"></div>
<div class="abs" style="left:180px;top:0px;width:1px;height:23px;background:#dcdcdc"></div>
<div class="abs" style="left:381px;top:0px;width:1px;height:23px;background:#dcdcdc"></div>
<div class="abs" style="left:456px;top:0px;width:1px;height:23px;background:#dcdcdc"></div>
<div class="abs" style="left:651px;top:0px;width:1px;height:23px;background:#dcdcdc"></div>
<div class="abs" style="left:725px;top:0px;width:1px;height:23px;background:#dcdcdc"></div>
<div class="abs" style="left:814px;top:0px;width:1px;height:23px;background:#dcdcdc"></div>
<div class="t" style="left:41px;top:4px;color:#4d4d4d">R_TRIG_xError</div>
<div class="t" style="left:191px;top:4px;color:#4d4d4d">MB_TCP_DiagInfo_EN_2 / Variables</div>
<div class="t" style="left:392px;top:4px;color:#4d4d4d">Define</div>
<div class="t" style="left:467px;top:4px;color:#4d4d4d">R_TRIG</div>
<div class="t" style="left:662px;top:4px;color:#4d4d4d">Local</div>
<div class="t" style="left:736px;top:4px;color:#4d4d4d">IEC - Variable</div>
<div class="abs" style="left:0;top:23px;width:1063px;height:23px;background:#f6f6f6;border-bottom:1px solid #dcdcdc"></div>
<div class="abs" style="left:0;top:23px;width:814px;height:23px;background:#eeeeee;border-bottom:1px solid #dcdcdc"></div>
<div class="abs" style="left:0;top:23px;width:30px;height:23px;background:#f3f3f3;border-bottom:1px solid #dcdcdc"></div>
<div class="abs" style="left:30px;top:23px;width:1px;height:23px;background:#dcdcdc"></div>
<div class="abs" style="left:180px;top:23px;width:1px;height:23px;background:#dcdcdc"></div>
<div class="abs" style="left:381px;top:23px;width:1px;height:23px;background:#dcdcdc"></div>
<div class="abs" style="left:456px;top:23px;width:1px;height:23px;background:#dcdcdc"></div>
<div class="abs" style="left:651px;top:23px;width:1px;height:23px;background:#dcdcdc"></div>
<div class="abs" style="left:725px;top:23px;width:1px;height:23px;background:#dcdcdc"></div>
<div class="abs" style="left:814px;top:23px;width:1px;height:23px;background:#dcdcdc"></div>
<div class="t" style="left:41px;top:27px;color:#4d4d4d">F_TRIG_xError</div>
<div class="t" style="left:191px;top:27px;color:#4d4d4d">MB_TCP_DiagInfo_EN_2 / Variables</div>
<div class="t" style="left:392px;top:27px;color:#4d4d4d">Define</div>
<div class="t" style="left:467px;top:27px;color:#4d4d4d">F_TRIG</div>
<div class="t" style="left:662px;top:27px;color:#4d4d4d">Local</div>
<div class="t" style="left:736px;top:27px;color:#4d4d4d">IEC - Variable</div>
<div class="abs" style="left:0;top:46px;width:1063px;height:23px;background:#ebebeb;border-bottom:1px solid #dcdcdc"></div>
<div class="abs" style="left:0;top:46px;width:814px;height:23px;background:#ebebeb;border-bottom:1px solid #dcdcdc"></div>
<div class="abs" style="left:0;top:46px;width:30px;height:23px;background:#f3f3f3;border-bottom:1px solid #dcdcdc"></div>
<div class="abs" style="left:30px;top:46px;width:1px;height:23px;background:#dcdcdc"></div>
<div class="abs" style="left:180px;top:46px;width:1px;height:23px;background:#dcdcdc"></div>
<div class="abs" style="left:381px;top:46px;width:1px;height:23px;background:#dcdcdc"></div>
<div class="abs" style="left:456px;top:46px;width:1px;height:23px;background:#dcdcdc"></div>
<div class="abs" style="left:651px;top:46px;width:1px;height:23px;background:#dcdcdc"></div>
<div class="abs" style="left:725px;top:46px;width:1px;height:23px;background:#dcdcdc"></div>
<div class="abs" style="left:814px;top:46px;width:1px;height:23px;background:#dcdcdc"></div>
<div class="t" style="left:41px;top:50px;color:#4d4d4d">strDiagCode</div>
<div class="t" style="left:191px;top:50px;color:#4d4d4d">MB_TCP_DiagInfo_EN_2 / Variables</div>
<div class="t" style="left:392px;top:50px;color:#4d4d4d">Define</div>
<div class="t" style="left:467px;top:50px;color:#4d4d4d">STRING</div>
<div class="t" style="left:662px;top:50px;color:#4d4d4d">Output</div>
<div class="t" style="left:736px;top:50px;color:#4d4d4d">IEC - Variable</div>
<div class="abs" style="left:0;top:69px;width:1063px;height:23px;background:#f6f6f6;border-bottom:1px solid #dcdcdc"></div>
<div class="abs" style="left:0;top:69px;width:814px;height:23px;background:#eeeeee;border-bottom:1px solid #dcdcdc"></div>
<div class="abs" style="left:0;top:69px;width:30px;height:23px;background:#f3f3f3;border-bottom:1px solid #dcdcdc"></div>
<div class="abs" style="left:30px;top:69px;width:1px;height:23px;background:#dcdcdc"></div>
<div class="abs" style="left:180px;top:69px;width:1px;height:23px;background:#dcdcdc"></div>
<div class="abs" style="left:381px;top:69px;width:1px;height:23px;background:#dcdcdc"></div>
<div class="abs" style="left:456px;top:69px;width:1px;height:23px;background:#dcdcdc"></div>
<div class="abs" style="left:651px;top:69px;width:1px;height:23px;background:#dcdcdc"></div>
<div class="abs" style="left:725px;top:69px;width:1px;height:23px;background:#dcdcdc"></div>
<div class="abs" style="left:814px;top:69px;width:1px;height:23px;background:#dcdcdc"></div>
<div class="t" style="left:41px;top:73px;color:#4d4d4d">strAddDiagCode</div>
<div class="t" style="left:191px;top:73px;color:#4d4d4d">MB_TCP_DiagInfo_EN_2 / Variables</div>
<div class="t" style="left:392px;top:73px;color:#4d4d4d">Define</div>
<div class="t" style="left:467px;top:73px;color:#4d4d4d">STRING</div>
<div class="t" style="left:662px;top:73px;color:#4d4d4d">Output</div>
<div class="t" style="left:736px;top:73px;color:#4d4d4d">IEC - Variable</div>
<div class="abs" style="left:0;top:92px;width:1063px;height:23px;background:#ebebeb;border-bottom:1px solid #dcdcdc"></div>
<div class="abs" style="left:0;top:92px;width:814px;height:23px;background:#ebebeb;border-bottom:1px solid #dcdcdc"></div>
<div class="abs" style="left:0;top:92px;width:30px;height:23px;background:#f3f3f3;border-bottom:1px solid #dcdcdc"></div>
<div class="abs" style="left:30px;top:92px;width:1px;height:23px;background:#dcdcdc"></div>
<div class="abs" style="left:180px;top:92px;width:1px;height:23px;background:#dcdcdc"></div>
<div class="abs" style="left:381px;top:92px;width:1px;height:23px;background:#dcdcdc"></div>
<div class="abs" style="left:456px;top:92px;width:1px;height:23px;background:#dcdcdc"></div>
<div class="abs" style="left:651px;top:92px;width:1px;height:23px;background:#dcdcdc"></div>
<div class="abs" style="left:725px;top:92px;width:1px;height:23px;background:#dcdcdc"></div>
<div class="abs" style="left:814px;top:92px;width:1px;height:23px;background:#dcdcdc"></div>
<div class="t" style="left:41px;top:96px;color:#4d4d4d">udtTCP_ComData</div>
<div class="t" style="left:191px;top:96px;color:#4d4d4d">MB_TCP_DiagInfo_EN_2 / Variables</div>
<div class="t" style="left:392px;top:96px;color:#4d4d4d">Define</div>
<div class="t" style="left:467px;top:96px;color:#4d4d4d">MB_TCP_UDT_COMMUNICATION</div>
<div class="t" style="left:662px;top:96px;color:#4d4d4d">In / Out</div>
<div class="t" style="left:736px;top:96px;color:#4d4d4d">IEC - Variable</div>
<div class="abs" style="left:0;top:115px;width:1063px;height:23px;background:#f6f6f6;border-bottom:1px solid #dcdcdc"></div>
<div class="abs" style="left:0;top:115px;width:814px;height:23px;background:#eeeeee;border-bottom:1px solid #dcdcdc"></div>
<div class="abs" style="left:0;top:115px;width:30px;height:23px;background:#f3f3f3;border-bottom:1px solid #dcdcdc"></div>
<div class="abs" style="left:30px;top:115px;width:1px;height:23px;background:#dcdcdc"></div>
<div class="abs" style="left:180px;top:115px;width:1px;height:23px;background:#dcdcdc"></div>
<div class="abs" style="left:381px;top:115px;width:1px;height:23px;background:#dcdcdc"></div>
<div class="abs" style="left:456px;top:115px;width:1px;height:23px;background:#dcdcdc"></div>
<div class="abs" style="left:651px;top:115px;width:1px;height:23px;background:#dcdcdc"></div>
<div class="abs" style="left:725px;top:115px;width:1px;height:23px;background:#dcdcdc"></div>
<div class="abs" style="left:814px;top:115px;width:1px;height:23px;background:#dcdcdc"></div>
<div class="t" style="left:41px;top:119px;color:#4d4d4d">R_TRIG_xError</div>
<div class="t" style="left:191px;top:119px;color:#4d4d4d">MB_TCP_DiagInfo_EN_2 / Code</div>
<div class="t" style="left:392px;top:119px;color:#4d4d4d">Call</div>
<div class="t" style="left:467px;top:119px;color:#4d4d4d">R_TRIG</div>
<div class="t" style="left:662px;top:119px;color:#4d4d4d"></div>
<div class="t" style="left:736px;top:119px;color:#4d4d4d">IEC - Variable</div>
<div class="abs" style="left:0;top:138px;width:1063px;height:23px;background:#ebebeb;border-bottom:1px solid #dcdcdc"></div>
<div class="abs" style="left:0;top:138px;width:814px;height:23px;background:#ebebeb;border-bottom:1px solid #dcdcdc"></div>
<div class="abs" style="left:0;top:138px;width:30px;height:23px;background:#f3f3f3;border-bottom:1px solid #dcdcdc"></div>
<div class="abs" style="left:30px;top:138px;width:1px;height:23px;background:#dcdcdc"></div>
<div class="abs" style="left:180px;top:138px;width:1px;height:23px;background:#dcdcdc"></div>
<div class="abs" style="left:381px;top:138px;width:1px;height:23px;background:#dcdcdc"></div>
<div class="abs" style="left:456px;top:138px;width:1px;height:23px;background:#dcdcdc"></div>
<div class="abs" style="left:651px;top:138px;width:1px;height:23px;background:#dcdcdc"></div>
<div class="abs" style="left:725px;top:138px;width:1px;height:23px;background:#dcdcdc"></div>
<div class="abs" style="left:814px;top:138px;width:1px;height:23px;background:#dcdcdc"></div>
<div class="t" style="left:41px;top:142px;color:#4d4d4d">udtTCP_ComData.xError</div>
<div class="t" style="left:191px;top:142px;color:#4d4d4d">MB_TCP_DiagInfo_EN_2 / Code</div>
<div class="t" style="left:392px;top:142px;color:#4d4d4d">Read</div>
<div class="t" style="left:467px;top:142px;color:#4d4d4d">MB_TCP_UDT_COMMUNICATION</div>
<div class="t" style="left:662px;top:142px;color:#4d4d4d"></div>
<div class="t" style="left:736px;top:142px;color:#4d4d4d">IEC - Variable</div>
<div class="abs" style="left:0;top:161px;width:1063px;height:23px;background:#f6f6f6;border-bottom:1px solid #dcdcdc"></div>
<div class="abs" style="left:0;top:161px;width:814px;height:23px;background:#eeeeee;border-bottom:1px solid #dcdcdc"></div>
<div class="abs" style="left:0;top:161px;width:30px;height:23px;background:#f3f3f3;border-bottom:1px solid #dcdcdc"></div>
<div class="abs" style="left:30px;top:161px;width:1px;height:23px;background:#dcdcdc"></div>
<div class="abs" style="left:180px;top:161px;width:1px;height:23px;background:#dcdcdc"></div>
<div class="abs" style="left:381px;top:161px;width:1px;height:23px;background:#dcdcdc"></div>
<div class="abs" style="left:456px;top:161px;width:1px;height:23px;background:#dcdcdc"></div>
<div class="abs" style="left:651px;top:161px;width:1px;height:23px;background:#dcdcdc"></div>
<div class="abs" style="left:725px;top:161px;width:1px;height:23px;background:#dcdcdc"></div>
<div class="abs" style="left:814px;top:161px;width:1px;height:23px;background:#dcdcdc"></div>
<div class="t" style="left:41px;top:165px;color:#4d4d4d">F_TRIG_xError</div>
<div class="t" style="left:191px;top:165px;color:#4d4d4d">MB_TCP_DiagInfo_EN_2 / Code</div>
<div class="t" style="left:392px;top:165px;color:#4d4d4d">Call</div>
<div class="t" style="left:467px;top:165px;color:#4d4d4d">F_TRIG</div>
<div class="t" style="left:662px;top:165px;color:#4d4d4d"></div>
<div class="t" style="left:736px;top:165px;color:#4d4d4d">IEC - Variable</div>
<div class="abs" style="left:0;top:184px;width:1063px;height:23px;background:#ebebeb;border-bottom:1px solid #dcdcdc"></div>
<div class="abs" style="left:0;top:184px;width:814px;height:23px;background:#ebebeb;border-bottom:1px solid #dcdcdc"></div>
<div class="abs" style="left:0;top:184px;width:30px;height:23px;background:#f3f3f3;border-bottom:1px solid #dcdcdc"></div>
<div class="abs" style="left:30px;top:184px;width:1px;height:23px;background:#dcdcdc"></div>
<div class="abs" style="left:180px;top:184px;width:1px;height:23px;background:#dcdcdc"></div>
<div class="abs" style="left:381px;top:184px;width:1px;height:23px;background:#dcdcdc"></div>
<div class="abs" style="left:456px;top:184px;width:1px;height:23px;background:#dcdcdc"></div>
<div class="abs" style="left:651px;top:184px;width:1px;height:23px;background:#dcdcdc"></div>
<div class="abs" style="left:725px;top:184px;width:1px;height:23px;background:#dcdcdc"></div>
<div class="abs" style="left:814px;top:184px;width:1px;height:23px;background:#dcdcdc"></div>
<div class="t" style="left:41px;top:188px;color:#4d4d4d">udtTCP_ComData.xError</div>
<div class="t" style="left:191px;top:188px;color:#4d4d4d">MB_TCP_DiagInfo_EN_2 / Code</div>
<div class="t" style="left:392px;top:188px;color:#4d4d4d">Read</div>
<div class="t" style="left:467px;top:188px;color:#4d4d4d">MB_TCP_UDT_COMMUNICATION</div>
<div class="t" style="left:662px;top:188px;color:#4d4d4d"></div>
<div class="t" style="left:736px;top:188px;color:#4d4d4d">IEC - Variable</div>
</div>
<svg style="left:1574px;top:649px" width="10" height="7" viewBox="0 0 10 7"><path d="M0 7L5.0 3L10 7V4L5.0 0L0 4z" fill="#333"/></svg>
<div class="abs" style="left:1576px;top:661px;width:6px;height:8px;background:#878787"></div>
<svg style="left:1574px;top:861px" width="10" height="7" viewBox="0 0 10 7"><path d="M0 0L5.0 4L10 0V3L5.0 7L0 3z" fill="#333"/></svg>
<div class="abs" style="left:508px;top:874px;width:1080px;height:2px;background:#2d2d30"></div>
<div class="abs" style="left:508px;top:876px;width:1080px;height:36px;background:#ebeded"></div>
<div class="abs" style="left:585px;top:879px;width:30px;height:30px;background:#7ecbcf"></div>
<svg style="left:516px;top:885px" width="20" height="18" viewBox="0 0 20 18"><rect x="0.5" y="0.5" width="19" height="17" fill="#fff" stroke="#58585a" stroke-width="1"/><rect x="0" y="0" width="20" height="3" fill="#58585a"/><path d="M3 6.5H4.5M3 8.5H4.5M3 10.5H4.5M3 12.5H4.5M6 6.5H17M6 8.5H17M6 10.5H17M6 12.5H17" stroke="#58585a" stroke-width="1"/><rect x="10" y="-4" width="14" height="10" fill="#8a2f9c"/><path d="M11.5 -3L17 1.5L22.5 -3" fill="none" stroke="#e6c8ee" stroke-width="1"/><circle cx="23" cy="6" r="2.6" fill="#e8d2ef" stroke="#8a2f9c" stroke-width="1"/></svg>
<svg style="left:553px;top:885px" width="20" height="18" viewBox="0 0 20 18"><rect x="0.5" y="0.5" width="19" height="17" fill="#fff" stroke="#58585a" stroke-width="1"/><rect x="0" y="0" width="20" height="3" fill="#58585a"/><circle cx="12" cy="11" r="4.3" fill="none" stroke="#58585a" stroke-width="1.1"/><path d="M15 14L21 20" stroke="#58585a" stroke-width="1.6"/></svg>
<svg style="left:590px;top:885px" width="20" height="18" viewBox="0 0 20 18"><rect x="0.5" y="0.5" width="19" height="17" fill="#fff" stroke="#58585a" stroke-width="1"/><rect x="0" y="0" width="20" height="3" fill="#58585a"/><circle cx="5" cy="10" r="2" fill="#58585a"/><path d="M6.5 9L11 6.5M6.5 11L11 13.5" stroke="#1a9fae" stroke-width="1"/><rect x="12.5" y="4" width="3.2" height="3" rx="1" fill="none" stroke="#58585a" stroke-width="1"/><rect x="12.5" y="13" width="3.2" height="3" rx="1" fill="none" stroke="#58585a" stroke-width="1"/></svg>
<svg style="left:627px;top:885px" width="20" height="18" viewBox="0 0 20 18"><rect x="0.5" y="0.5" width="19" height="17" fill="#fff" stroke="#58585a" stroke-width="1"/><rect x="0" y="0" width="20" height="3" fill="#58585a"/><rect x="2.5" y="5" width="7" height="5" fill="none" stroke="#58585a" stroke-width="1"/><rect x="2" y="4.5" width="8" height="1.5" fill="#58585a"/><path d="M11.5 5L15.5 8M3 13L6.5 16" stroke="#58585a" stroke-width="1.2"/><rect x="10.5" y="10" width="8" height="6" fill="#fff" stroke="#1a9fae" stroke-width="1"/><rect x="10" y="9.5" width="9" height="1.5" fill="#1a9fae"/><path d="M12.5 13H16.5" stroke="#1a9fae" stroke-width="1"/></svg>
<svg style="left:664px;top:885px" width="20" height="18" viewBox="0 0 20 18"><rect x="0.5" y="0.5" width="19" height="17" fill="#fff" stroke="#58585a" stroke-width="1"/><rect x="0" y="0" width="20" height="3" fill="#58585a"/><path d="M2 8H17" stroke="#58585a" stroke-width="1"/><path d="M3 8.5Q3.5 11.5 6 11.5Q8.5 11.5 8.8 8.5M11.2 8.5Q11.5 11.5 14 11.5Q16.5 11.5 17 8.5" fill="none" stroke="#58585a" stroke-width="1.1"/></svg>
<svg style="left:701px;top:885px" width="20" height="18" viewBox="0 0 20 18"><rect x="0.5" y="0.5" width="19" height="17" fill="#fff" stroke="#58585a" stroke-width="1"/><rect x="0" y="0" width="20" height="3" fill="#58585a"/><path d="M2 15L6 10L9 13L14 6L17.5 10.5" fill="none" stroke="#58585a" stroke-width="1.2"/></svg>
<svg style="left:738px;top:885px" width="20" height="18" viewBox="0 0 20 18"><rect x="0.5" y="0.5" width="19" height="17" fill="#fff" stroke="#58585a" stroke-width="1"/><rect x="0" y="0" width="20" height="3" fill="#58585a"/><rect x="7" y="4.2" width="6" height="1.5" fill="#58585a"/><rect x="9" y="5.5" width="2" height="2" fill="#58585a"/><path d="M5.5 8H14.5V16H5.5z" fill="#58585a"/></svg>
<svg style="left:775px;top:885px" width="20" height="18" viewBox="0 0 20 18"><rect x="0.5" y="0.5" width="19" height="17" fill="#fff" stroke="#58585a" stroke-width="1"/><rect x="0" y="0" width="20" height="3" fill="#58585a"/><circle cx="4" cy="15" r="5.9" fill="#555"/></svg>
<svg style="left:812px;top:885px" width="20" height="18" viewBox="0 0 20 18"><rect x="0.5" y="0.5" width="19" height="17" fill="#fff" stroke="#58585a" stroke-width="1"/><rect x="0" y="0" width="20" height="3" fill="#58585a"/><path d="M3 6.5H16M3 8.5H15M3 10.5H13" stroke="#58585a" stroke-width="1"/><rect x="15" y="12" width="8" height="8" fill="#ebeded"/><rect x="8" y="17" width="8" height="4" fill="#ebeded"/><path d="M18.5 8.5Q19 15 10 18.5" fill="none" stroke="#1a9fae" stroke-width="2.2"/><path d="M17 7L20.5 8.8L19 11.5L16.3 10z M8 16.5L11.5 17L10.5 20.5L7.5 19z" fill="#1a9fae"/></svg>
<svg style="left:849px;top:885px" width="20" height="18" viewBox="0 0 20 18"><rect x="0.5" y="0.5" width="19" height="17" fill="#fff" stroke="#58585a" stroke-width="1"/><rect x="0" y="0" width="20" height="3" fill="#58585a"/><rect x="4" y="7.5" width="12" height="6.5" rx="3.25" fill="#58585a"/><circle cx="13" cy="10.75" r="2.3" fill="#fff"/></svg>
<svg style="left:886px;top:885px" width="20" height="18" viewBox="0 0 20 18"><rect x="0.5" y="0.5" width="19" height="17" fill="#fff" stroke="#58585a" stroke-width="1"/><rect x="0" y="0" width="20" height="3" fill="#58585a"/><text x="2.2" y="13.2" font-family="Liberation Mono" font-weight="bold" font-size="8.5" fill="#58585a">LOG</text></svg>
<svg style="left:923px;top:885px" width="20" height="18" viewBox="0 0 20 18"><rect x="0.5" y="0.5" width="19" height="17" fill="#fff" stroke="#58585a" stroke-width="1"/><rect x="0" y="0" width="20" height="3" fill="#58585a"/><rect x="-3.5" y="7" width="10" height="12" fill="#ebeded"/><path d="M-3.5 7.5H6.5" stroke="#58585a" stroke-width="1.2"/><rect x="-0.5" y="6" width="4" height="1.2" fill="#58585a"/><path d="M-2.5 9H5.5L4.5 20H-1.5z" fill="#58585a"/></svg>
<div class="abs" style="left:1594px;top:6px;width:316px;height:2px;background:#4fb5e6"></div>
<div class="hdr" style="left:1594px;top:8px;width:316px;height:20px;padding-left:4px">COMPONENTS</div>
<div class="abs" style="left:1594px;top:28px;width:316px;height:1px;background:#333"></div>
<div class="abs" style="left:1594px;top:29px;width:316px;height:30px;background:#f4f4f4"></div>
<svg style="left:1606px;top:37px" width="14" height="14" viewBox="0 0 14 14"><path d="M0 0h5.5L0 5.5zM14 0v5.5L8.5 0zM0 14v-5.5L5.5 14zM14 14h-5.5L14 8.5z" fill="#58585a"/><path d="M2 2L6.2 6.2M12 2L7.8 6.2M2 12L6.2 7.8M12 12L7.8 7.8" stroke="#58585a" stroke-width="1.4"/></svg>
<svg style="left:1629.5px;top:36.5px" width="15" height="15" viewBox="0 0 15 15"><path d="M6.2 1.6V6.1H1.7zM8.6 1.6V6.1H13.1zM6.2 13.4V8.9H1.7zM8.6 13.4V8.9H13.1z" fill="#58585a"/><path d="M0.3 0.3L4.6 4.6M14.5 0.3L10.2 4.6M0.3 14.7L4.6 10.4M14.5 14.7L10.2 10.4" stroke="#58585a" stroke-width="1.4"/></svg>
<svg style="left:1653px;top:37px" width="14" height="15" viewBox="0 0 14 15"><path d="M0.3 4L4 0.5V7.5z" fill="#58585a"/><path d="M3.5 4H13.5" stroke="#58585a" stroke-width="1.2"/><path d="M14.5 11L10.8 7.5V14.5z" fill="#58585a"/><path d="M2.5 11H11" stroke="#58585a" stroke-width="1.2"/></svg>
<svg style="left:1682px;top:51px" width="6" height="3" viewBox="0 0 6 3"><path d="M0 0H6L3 3z" fill="#c9cdd2"/></svg>
<div class="abs" style="left:1594px;top:59px;width:316px;height:1px;background:#333"></div>
<div class="abs" style="left:1594px;top:60px;width:316px;height:744px;background:#fff"></div>
<div class="abs" style="left:1767px;top:32px;width:130px;height:24px;background:#fff;border:1px solid #c5ccd0"></div>
<div class="t" style="left:1778px;top:36px;color:#9a9a9a">Search</div>
<svg style="left:1876px;top:37px" width="13" height="14" viewBox="0 0 13 14"><path d="M0.5 0.6H12.5V2L9.6 5.2V10.8L7.6 9.4V5.2L0.5 2z" fill="#5f5f62"/><circle cx="2.7" cy="8.3" r="2.8" fill="#fff" fill-opacity="0.6" stroke="#1a9fae" stroke-width="1.3"/><path d="M4.7 10.4L7.8 13.8" stroke="#1a9fae" stroke-width="1.6"/></svg>
<svg style="left:1905px;top:51px" width="6" height="3" viewBox="0 0 6 3"><path d="M0 0H6L3 3z" fill="#c9cdd2"/></svg>
<div class="t" style="left:1634px;top:66px;font-weight:bold;color:#333">Programming (608)</div>
<svg style="left:1599px;top:70px" width="8" height="6" viewBox="0 0 8 6"><path d="M0 0L4.0 3L8 0V3L4.0 6L0 3z" fill="#58585a"/></svg>
<svg style="left:1615px;top:69px" width="14" height="11" viewBox="0 0 14 11"><rect x="0" y="0" width="6" height="1" fill="#4a9cc4"/><rect x="0" y="0.8" width="12.8" height="1.9" fill="#4a9cc4"/><rect x="0" y="0" width="1.05" height="11" fill="#4a9cc4"/><rect x="2.1" y="4.4" width="11.9" height="6.6" fill="#4a9cc4"/><rect x="0" y="9.8" width="14" height="1.2" fill="#4a9cc4"/></svg>
<div class="abs" style="left:1599px;top:96px;width:311px;height:1px;background:#e4e4e4"></div>
<div class="abs" style="left:1594px;top:98px;width:310px;height:706px;overflow:hidden">
<div class="t" style="left:44px;top:4px">Local (172)</div>
<svg style="left:14px;top:8px" width="8" height="6" viewBox="0 0 8 6"><path d="M0 0L4.0 3L8 0V3L4.0 6L0 3z" fill="#58585a"/></svg>
<svg style="left:27px;top:5px" width="14" height="12" viewBox="0 0 14 12"><path d="M0 0H5V1H14V12H0z" fill="#4a9cc4"/><rect x="1" y="2" width="12" height="0.9" fill="#fff"/><circle cx="4.5" cy="7.5" r="2.3" fill="#fff"/><path d="M3.2 7.5H5.8M4.5 6.2V8.8" stroke="#4a9cc4" stroke-width="0.9"/><rect x="6.5" y="6.9" width="3" height="1.2" fill="#fff"/><circle cx="10.5" cy="7.5" r="1.6" fill="#fff"/><circle cx="10.5" cy="7.5" r="0.6" fill="#4a9cc4"/></svg>
<div class="t" style="left:63px;top:22px">Data Types (6)</div>
<svg style="left:33px;top:26px" width="8" height="6" viewBox="0 0 8 6"><path d="M0 0L4.0 3L8 0V3L4.0 6L0 3z" fill="#58585a"/></svg>
<svg style="left:46px;top:25px" width="14" height="11" viewBox="0 0 14 11"><rect x="0" y="0" width="6" height="1" fill="#4a9cc4"/><rect x="0" y="0.8" width="12.8" height="1.9" fill="#4a9cc4"/><rect x="0" y="0" width="1.05" height="11" fill="#4a9cc4"/><rect x="2.1" y="4.4" width="11.9" height="6.6" fill="#4a9cc4"/><rect x="0" y="9.8" width="14" height="1.2" fill="#4a9cc4"/></svg>
<div class="t" style="left:82px;top:40px">ControlPorte</div>
<svg style="left:64px;top:41px" width="16" height="12" viewBox="0 0 16 12"><rect x="0" y="0" width="16" height="12" fill="#4497c0"/><rect x="1" y="2.8" width="4" height="1.9" fill="#fff"/><rect x="6" y="2.8" width="4" height="1.9" fill="#fff"/><rect x="11" y="2.8" width="4" height="1.9" fill="#fff"/><rect x="1" y="5.8" width="4" height="1.9" fill="#fff"/><rect x="6" y="5.8" width="4" height="1.9" fill="#fff"/><rect x="11" y="5.8" width="4" height="1.9" fill="#fff"/><rect x="1" y="8.8" width="4" height="1.9" fill="#fff"/><rect x="6" y="8.8" width="4" height="1.9" fill="#fff"/><rect x="11" y="8.8" width="4" height="1.9" fill="#fff"/></svg>
<div class="t" style="left:82px;top:58px">SolB_Event</div>
<svg style="left:64px;top:59px" width="16" height="12" viewBox="0 0 16 12"><rect x="0" y="0" width="16" height="12" fill="#4497c0"/><rect x="1" y="2.8" width="4" height="1.9" fill="#fff"/><rect x="6" y="2.8" width="4" height="1.9" fill="#fff"/><rect x="11" y="2.8" width="4" height="1.9" fill="#fff"/><rect x="1" y="5.8" width="4" height="1.9" fill="#fff"/><rect x="6" y="5.8" width="4" height="1.9" fill="#fff"/><rect x="11" y="5.8" width="4" height="1.9" fill="#fff"/><rect x="1" y="8.8" width="4" height="1.9" fill="#fff"/><rect x="6" y="8.8" width="4" height="1.9" fill="#fff"/><rect x="11" y="8.8" width="4" height="1.9" fill="#fff"/></svg>
<div class="t" style="left:82px;top:76px">SolB_General</div>
<svg style="left:64px;top:77px" width="16" height="12" viewBox="0 0 16 12"><rect x="0" y="0" width="16" height="12" fill="#4497c0"/><rect x="1" y="2.8" width="4" height="1.9" fill="#fff"/><rect x="6" y="2.8" width="4" height="1.9" fill="#fff"/><rect x="11" y="2.8" width="4" height="1.9" fill="#fff"/><rect x="1" y="5.8" width="4" height="1.9" fill="#fff"/><rect x="6" y="5.8" width="4" height="1.9" fill="#fff"/><rect x="11" y="5.8" width="4" height="1.9" fill="#fff"/><rect x="1" y="8.8" width="4" height="1.9" fill="#fff"/><rect x="6" y="8.8" width="4" height="1.9" fill="#fff"/><rect x="11" y="8.8" width="4" height="1.9" fill="#fff"/></svg>
<div class="t" style="left:82px;top:94px">SolB_SimplyLogger</div>
<svg style="left:64px;top:95px" width="16" height="12" viewBox="0 0 16 12"><rect x="0" y="0" width="16" height="12" fill="#4497c0"/><rect x="1" y="2.8" width="4" height="1.9" fill="#fff"/><rect x="6" y="2.8" width="4" height="1.9" fill="#fff"/><rect x="11" y="2.8" width="4" height="1.9" fill="#fff"/><rect x="1" y="5.8" width="4" height="1.9" fill="#fff"/><rect x="6" y="5.8" width="4" height="1.9" fill="#fff"/><rect x="11" y="5.8" width="4" height="1.9" fill="#fff"/><rect x="1" y="8.8" width="4" height="1.9" fill="#fff"/><rect x="6" y="8.8" width="4" height="1.9" fill="#fff"/><rect x="11" y="8.8" width="4" height="1.9" fill="#fff"/></svg>
<div class="t" style="left:82px;top:112px">TriMeteo</div>
<svg style="left:64px;top:113px" width="16" height="12" viewBox="0 0 16 12"><rect x="0" y="0" width="16" height="12" fill="#4497c0"/><rect x="1" y="2.8" width="4" height="1.9" fill="#fff"/><rect x="6" y="2.8" width="4" height="1.9" fill="#fff"/><rect x="11" y="2.8" width="4" height="1.9" fill="#fff"/><rect x="1" y="5.8" width="4" height="1.9" fill="#fff"/><rect x="6" y="5.8" width="4" height="1.9" fill="#fff"/><rect x="11" y="5.8" width="4" height="1.9" fill="#fff"/><rect x="1" y="8.8" width="4" height="1.9" fill="#fff"/><rect x="6" y="8.8" width="4" height="1.9" fill="#fff"/><rect x="11" y="8.8" width="4" height="1.9" fill="#fff"/></svg>
<div class="t" style="left:82px;top:130px">UDT</div>
<svg style="left:64px;top:131px" width="16" height="12" viewBox="0 0 16 12"><rect x="0" y="0" width="16" height="12" fill="#4497c0"/><rect x="1" y="2.8" width="4" height="1.9" fill="#fff"/><rect x="6" y="2.8" width="4" height="1.9" fill="#fff"/><rect x="11" y="2.8" width="4" height="1.9" fill="#fff"/><rect x="1" y="5.8" width="4" height="1.9" fill="#fff"/><rect x="6" y="5.8" width="4" height="1.9" fill="#fff"/><rect x="11" y="5.8" width="4" height="1.9" fill="#fff"/><rect x="1" y="8.8" width="4" height="1.9" fill="#fff"/><rect x="6" y="8.8" width="4" height="1.9" fill="#fff"/><rect x="11" y="8.8" width="4" height="1.9" fill="#fff"/></svg>
<div class="t" style="left:63px;top:148px">Functions &amp; Function Blocks (159)</div>
<svg style="left:33px;top:152px" width="8" height="6" viewBox="0 0 8 6"><path d="M0 0L4.0 3L8 0V3L4.0 6L0 3z" fill="#58585a"/></svg>
<svg style="left:46px;top:151px" width="14" height="11" viewBox="0 0 14 11"><rect x="0" y="0" width="6" height="1" fill="#4a9cc4"/><rect x="0" y="0.8" width="12.8" height="1.9" fill="#4a9cc4"/><rect x="0" y="0" width="1.05" height="11" fill="#4a9cc4"/><rect x="2.1" y="4.4" width="11.9" height="6.6" fill="#4a9cc4"/><rect x="0" y="9.8" width="14" height="1.2" fill="#4a9cc4"/></svg>
<div class="t" style="left:82px;top:166px">BK Blocs (16)</div>
<svg style="left:52px;top:170px" width="8" height="6" viewBox="0 0 8 6"><path d="M0 0L4.0 3L8 0V3L4.0 6L0 3z" fill="#58585a"/></svg>
<svg style="left:65px;top:169px" width="14" height="11" viewBox="0 0 14 11"><rect x="0" y="0" width="6" height="1" fill="#4a9cc4"/><rect x="0" y="0.8" width="12.8" height="1.9" fill="#4a9cc4"/><rect x="0" y="0" width="1.05" height="11" fill="#4a9cc4"/><rect x="2.1" y="4.4" width="11.9" height="6.6" fill="#4a9cc4"/><rect x="0" y="9.8" width="14" height="1.2" fill="#4a9cc4"/></svg>
<div class="t" style="left:101px;top:184px">BK_Alerte</div>
<svg style="left:83px;top:186px" width="16" height="10" viewBox="0 0 16 10"><rect x="2.5" y="0.45" width="11" height="9.3" fill="none" stroke="#4497c0" stroke-width="0.9"/><rect x="4.3" y="2.4" width="7.6" height="1.4" fill="#4497c0"/><rect x="0" y="2.4" width="2.5" height="1.3" fill="#4497c0"/><rect x="0" y="6.5" width="2.5" height="1.3" fill="#4497c0"/><rect x="13.5" y="4.3" width="2.3" height="1.3" fill="#4497c0"/></svg>
<div class="t" style="left:101px;top:202px">BK_Alerte_PTR</div>
<svg style="left:83px;top:204px" width="16" height="10" viewBox="0 0 16 10"><rect x="2.5" y="0.45" width="11" height="9.3" fill="none" stroke="#4497c0" stroke-width="0.9"/><rect x="4.3" y="2.4" width="7.6" height="1.4" fill="#4497c0"/><rect x="0" y="2.4" width="2.5" height="1.3" fill="#4497c0"/><rect x="0" y="6.5" width="2.5" height="1.3" fill="#4497c0"/><rect x="13.5" y="4.3" width="2.3" height="1.3" fill="#4497c0"/></svg>
<div class="t" style="left:101px;top:220px">BK_Commandes</div>
<svg style="left:83px;top:222px" width="16" height="10" viewBox="0 0 16 10"><rect x="2.5" y="0.45" width="11" height="9.3" fill="none" stroke="#4497c0" stroke-width="0.9"/><rect x="4.3" y="2.4" width="7.6" height="1.4" fill="#4497c0"/><rect x="0" y="2.4" width="2.5" height="1.3" fill="#4497c0"/><rect x="0" y="6.5" width="2.5" height="1.3" fill="#4497c0"/><rect x="13.5" y="4.3" width="2.3" height="1.3" fill="#4497c0"/></svg>
<div class="t" style="left:101px;top:238px">BK_EnvoiFTP</div>
<svg style="left:83px;top:240px" width="16" height="10" viewBox="0 0 16 10"><rect x="2.5" y="0.45" width="11" height="9.3" fill="none" stroke="#4497c0" stroke-width="0.9"/><rect x="4.3" y="2.4" width="7.6" height="1.4" fill="#4497c0"/><rect x="0" y="2.4" width="2.5" height="1.3" fill="#4497c0"/><rect x="0" y="6.5" width="2.5" height="1.3" fill="#4497c0"/><rect x="13.5" y="4.3" width="2.3" height="1.3" fill="#4497c0"/></svg>
<div class="t" style="left:101px;top:256px">BK_HT_PDL</div>
<svg style="left:83px;top:258px" width="16" height="10" viewBox="0 0 16 10"><rect x="2.5" y="0.45" width="11" height="9.3" fill="none" stroke="#4497c0" stroke-width="0.9"/><rect x="4.3" y="2.4" width="7.6" height="1.4" fill="#4497c0"/><rect x="0" y="2.4" width="2.5" height="1.3" fill="#4497c0"/><rect x="0" y="6.5" width="2.5" height="1.3" fill="#4497c0"/><rect x="13.5" y="4.3" width="2.3" height="1.3" fill="#4497c0"/></svg>
<div class="t" style="left:101px;top:274px">BK_HT_PDLPTR</div>
<svg style="left:83px;top:276px" width="16" height="10" viewBox="0 0 16 10"><rect x="2.5" y="0.45" width="11" height="9.3" fill="none" stroke="#4497c0" stroke-width="0.9"/><rect x="4.3" y="2.4" width="7.6" height="1.4" fill="#4497c0"/><rect x="0" y="2.4" width="2.5" height="1.3" fill="#4497c0"/><rect x="0" y="6.5" width="2.5" height="1.3" fill="#4497c0"/><rect x="13.5" y="4.3" width="2.3" height="1.3" fill="#4497c0"/></svg>
<div class="t" style="left:101px;top:292px">BK_LogEvents</div>
<svg style="left:83px;top:294px" width="16" height="10" viewBox="0 0 16 10"><rect x="2.5" y="0.45" width="11" height="9.3" fill="none" stroke="#4497c0" stroke-width="0.9"/><rect x="4.3" y="2.4" width="7.6" height="1.4" fill="#4497c0"/><rect x="0" y="2.4" width="2.5" height="1.3" fill="#4497c0"/><rect x="0" y="6.5" width="2.5" height="1.3" fill="#4497c0"/><rect x="13.5" y="4.3" width="2.3" height="1.3" fill="#4497c0"/></svg>
<div class="t" style="left:101px;top:310px">BK_Meteo</div>
<svg style="left:83px;top:312px" width="16" height="10" viewBox="0 0 16 10"><rect x="2.5" y="0.45" width="11" height="9.3" fill="none" stroke="#4497c0" stroke-width="0.9"/><rect x="4.3" y="2.4" width="7.6" height="1.4" fill="#4497c0"/><rect x="0" y="2.4" width="2.5" height="1.3" fill="#4497c0"/><rect x="0" y="6.5" width="2.5" height="1.3" fill="#4497c0"/><rect x="13.5" y="4.3" width="2.3" height="1.3" fill="#4497c0"/></svg>
<div class="t" style="left:101px;top:328px">BK_Meteo_EG</div>
<svg style="left:83px;top:330px" width="16" height="10" viewBox="0 0 16 10"><rect x="2.5" y="0.45" width="11" height="9.3" fill="none" stroke="#4497c0" stroke-width="0.9"/><rect x="4.3" y="2.4" width="7.6" height="1.4" fill="#4497c0"/><rect x="0" y="2.4" width="2.5" height="1.3" fill="#4497c0"/><rect x="0" y="6.5" width="2.5" height="1.3" fill="#4497c0"/><rect x="13.5" y="4.3" width="2.3" height="1.3" fill="#4497c0"/></svg>
<div class="t" style="left:101px;top:346px">BK_Onduleurs</div>
<svg style="left:83px;top:348px" width="16" height="10" viewBox="0 0 16 10"><rect x="2.5" y="0.45" width="11" height="9.3" fill="none" stroke="#4497c0" stroke-width="0.9"/><rect x="4.3" y="2.4" width="7.6" height="1.4" fill="#4497c0"/><rect x="0" y="2.4" width="2.5" height="1.3" fill="#4497c0"/><rect x="0" y="6.5" width="2.5" height="1.3" fill="#4497c0"/><rect x="13.5" y="4.3" width="2.3" height="1.3" fill="#4497c0"/></svg>
<div class="t" style="left:101px;top:364px">BK_Poste</div>
<svg style="left:83px;top:366px" width="16" height="10" viewBox="0 0 16 10"><rect x="2.5" y="0.45" width="11" height="9.3" fill="none" stroke="#4497c0" stroke-width="0.9"/><rect x="4.3" y="2.4" width="7.6" height="1.4" fill="#4497c0"/><rect x="0" y="2.4" width="2.5" height="1.3" fill="#4497c0"/><rect x="0" y="6.5" width="2.5" height="1.3" fill="#4497c0"/><rect x="13.5" y="4.3" width="2.3" height="1.3" fill="#4497c0"/></svg>
<div class="t" style="left:101px;top:382px">BK_Poste_EG</div>
<svg style="left:83px;top:384px" width="16" height="10" viewBox="0 0 16 10"><rect x="2.5" y="0.45" width="11" height="9.3" fill="none" stroke="#4497c0" stroke-width="0.9"/><rect x="4.3" y="2.4" width="7.6" height="1.4" fill="#4497c0"/><rect x="0" y="2.4" width="2.5" height="1.3" fill="#4497c0"/><rect x="0" y="6.5" width="2.5" height="1.3" fill="#4497c0"/><rect x="13.5" y="4.3" width="2.3" height="1.3" fill="#4497c0"/></svg>
<div class="t" style="left:101px;top:400px">BK_PPC</div>
<svg style="left:83px;top:402px" width="16" height="10" viewBox="0 0 16 10"><rect x="2.5" y="0.45" width="11" height="9.3" fill="none" stroke="#4497c0" stroke-width="0.9"/><rect x="4.3" y="2.4" width="7.6" height="1.4" fill="#4497c0"/><rect x="0" y="2.4" width="2.5" height="1.3" fill="#4497c0"/><rect x="0" y="6.5" width="2.5" height="1.3" fill="#4497c0"/><rect x="13.5" y="4.3" width="2.3" height="1.3" fill="#4497c0"/></svg>
<div class="t" style="left:101px;top:418px">BK_PPC_EG</div>
<svg style="left:83px;top:420px" width="16" height="10" viewBox="0 0 16 10"><rect x="2.5" y="0.45" width="11" height="9.3" fill="none" stroke="#4497c0" stroke-width="0.9"/><rect x="4.3" y="2.4" width="7.6" height="1.4" fill="#4497c0"/><rect x="0" y="2.4" width="2.5" height="1.3" fill="#4497c0"/><rect x="0" y="6.5" width="2.5" height="1.3" fill="#4497c0"/><rect x="13.5" y="4.3" width="2.3" height="1.3" fill="#4497c0"/></svg>
<div class="t" style="left:101px;top:436px">BK_Synthese</div>
<svg style="left:83px;top:438px" width="16" height="10" viewBox="0 0 16 10"><rect x="2.5" y="0.45" width="11" height="9.3" fill="none" stroke="#4497c0" stroke-width="0.9"/><rect x="4.3" y="2.4" width="7.6" height="1.4" fill="#4497c0"/><rect x="0" y="2.4" width="2.5" height="1.3" fill="#4497c0"/><rect x="0" y="6.5" width="2.5" height="1.3" fill="#4497c0"/><rect x="13.5" y="4.3" width="2.3" height="1.3" fill="#4497c0"/></svg>
<div class="t" style="left:101px;top:454px">BK_Systeme</div>
<svg style="left:83px;top:456px" width="16" height="10" viewBox="0 0 16 10"><rect x="2.5" y="0.45" width="11" height="9.3" fill="none" stroke="#4497c0" stroke-width="0.9"/><rect x="4.3" y="2.4" width="7.6" height="1.4" fill="#4497c0"/><rect x="0" y="2.4" width="2.5" height="1.3" fill="#4497c0"/><rect x="0" y="6.5" width="2.5" height="1.3" fill="#4497c0"/><rect x="13.5" y="4.3" width="2.3" height="1.3" fill="#4497c0"/></svg>
<div class="t" style="left:82px;top:472px">ENGIE GREEN (37)</div>
<svg style="left:52px;top:476px" width="8" height="6" viewBox="0 0 8 6"><path d="M0 0L4.0 3L8 0V3L4.0 6L0 3z" fill="#58585a"/></svg>
<svg style="left:65px;top:475px" width="14" height="11" viewBox="0 0 14 11"><rect x="0" y="0" width="6" height="1" fill="#4a9cc4"/><rect x="0" y="0.8" width="12.8" height="1.9" fill="#4a9cc4"/><rect x="0" y="0" width="1.05" height="11" fill="#4a9cc4"/><rect x="2.1" y="4.4" width="11.9" height="6.6" fill="#4a9cc4"/><rect x="0" y="9.8" width="14" height="1.2" fill="#4a9cc4"/></svg>
<div class="t" style="left:101px;top:490px">DEIE (10)</div>
<svg style="left:72px;top:493px" width="6" height="8" viewBox="0 0 6 8"><path d="M0 0H2.9L6 4.0L2.9 8H0L3.1 4.0z" fill="#555557"/></svg>
<svg style="left:84px;top:493px" width="14" height="11" viewBox="0 0 14 11"><rect x="0" y="0" width="6" height="1" fill="#4a9cc4"/><rect x="0" y="0.8" width="12.8" height="1.9" fill="#4a9cc4"/><rect x="0" y="0" width="1.05" height="11" fill="#4a9cc4"/><rect x="2.1" y="4.4" width="11.9" height="6.6" fill="#4a9cc4"/><rect x="0" y="9.8" width="14" height="1.2" fill="#4a9cc4"/></svg>
<div class="t" style="left:101px;top:508px">PDL (14)</div>
<svg style="left:72px;top:511px" width="6" height="8" viewBox="0 0 6 8"><path d="M0 0H2.9L6 4.0L2.9 8H0L3.1 4.0z" fill="#555557"/></svg>
<svg style="left:84px;top:511px" width="14" height="11" viewBox="0 0 14 11"><rect x="0" y="0" width="6" height="1" fill="#4a9cc4"/><rect x="0" y="0.8" width="12.8" height="1.9" fill="#4a9cc4"/><rect x="0" y="0" width="1.05" height="11" fill="#4a9cc4"/><rect x="2.1" y="4.4" width="11.9" height="6.6" fill="#4a9cc4"/><rect x="0" y="9.8" width="14" height="1.2" fill="#4a9cc4"/></svg>
<div class="t" style="left:101px;top:526px">SUPERVISION (2)</div>
<svg style="left:72px;top:529px" width="6" height="8" viewBox="0 0 6 8"><path d="M0 0H2.9L6 4.0L2.9 8H0L3.1 4.0z" fill="#555557"/></svg>
<svg style="left:84px;top:529px" width="14" height="11" viewBox="0 0 14 11"><rect x="0" y="0" width="6" height="1" fill="#4a9cc4"/><rect x="0" y="0.8" width="12.8" height="1.9" fill="#4a9cc4"/><rect x="0" y="0" width="1.05" height="11" fill="#4a9cc4"/><rect x="2.1" y="4.4" width="11.9" height="6.6" fill="#4a9cc4"/><rect x="0" y="9.8" width="14" height="1.2" fill="#4a9cc4"/></svg>
<div class="t" style="left:101px;top:544px">BIT_DE_VIE</div>
<svg style="left:83px;top:546px" width="16" height="10" viewBox="0 0 16 10"><rect x="2.5" y="0.45" width="11" height="9.3" fill="none" stroke="#4497c0" stroke-width="0.9"/><rect x="4.3" y="2.4" width="7.6" height="1.4" fill="#4497c0"/><rect x="0" y="2.4" width="2.5" height="1.3" fill="#4497c0"/><rect x="0" y="6.5" width="2.5" height="1.3" fill="#4497c0"/><rect x="13.5" y="4.3" width="2.3" height="1.3" fill="#4497c0"/></svg>
<div class="t" style="left:101px;top:562px">BITS_TO_WORD_AI</div>
<svg style="left:83px;top:564px" width="16" height="10" viewBox="0 0 16 10"><rect x="2.5" y="0.45" width="11" height="9.3" fill="none" stroke="#4497c0" stroke-width="0.9"/><rect x="4.3" y="2.4" width="7.6" height="1.4" fill="#4497c0"/><rect x="0" y="2.4" width="2.5" height="1.3" fill="#4497c0"/><rect x="0" y="6.5" width="2.5" height="1.3" fill="#4497c0"/><rect x="13.5" y="4.3" width="2.3" height="1.3" fill="#4497c0"/></svg>
<div class="t" style="left:101px;top:580px">COMPTAGE</div>
<svg style="left:83px;top:582px" width="16" height="10" viewBox="0 0 16 10"><rect x="2.5" y="0.45" width="11" height="9.3" fill="none" stroke="#4497c0" stroke-width="0.9"/><rect x="4.3" y="2.4" width="7.6" height="1.4" fill="#4497c0"/><rect x="0" y="2.4" width="2.5" height="1.3" fill="#4497c0"/><rect x="0" y="6.5" width="2.5" height="1.3" fill="#4497c0"/><rect x="13.5" y="4.3" width="2.3" height="1.3" fill="#4497c0"/></svg>
<div class="t" style="left:101px;top:598px">EXTRACT_BITS</div>
<svg style="left:83px;top:600px" width="16" height="10" viewBox="0 0 16 10"><rect x="2.5" y="0.45" width="11" height="9.3" fill="none" stroke="#4497c0" stroke-width="0.9"/><rect x="4.3" y="2.4" width="7.6" height="1.4" fill="#4497c0"/><rect x="0" y="2.4" width="2.5" height="1.3" fill="#4497c0"/><rect x="0" y="6.5" width="2.5" height="1.3" fill="#4497c0"/><rect x="13.5" y="4.3" width="2.3" height="1.3" fill="#4497c0"/></svg>
<div class="t" style="left:101px;top:616px">FB_TELECOMMANDE</div>
<svg style="left:83px;top:618px" width="16" height="10" viewBox="0 0 16 10"><rect x="2.5" y="0.45" width="11" height="9.3" fill="none" stroke="#4497c0" stroke-width="0.9"/><rect x="4.3" y="2.4" width="7.6" height="1.4" fill="#4497c0"/><rect x="0" y="2.4" width="2.5" height="1.3" fill="#4497c0"/><rect x="0" y="6.5" width="2.5" height="1.3" fill="#4497c0"/><rect x="13.5" y="4.3" width="2.3" height="1.3" fill="#4497c0"/></svg>
<div class="t" style="left:101px;top:634px">INFORMATIONS</div>
<svg style="left:83px;top:636px" width="16" height="10" viewBox="0 0 16 10"><rect x="2.5" y="0.45" width="11" height="9.3" fill="none" stroke="#4497c0" stroke-width="0.9"/><rect x="4.3" y="2.4" width="7.6" height="1.4" fill="#4497c0"/><rect x="0" y="2.4" width="2.5" height="1.3" fill="#4497c0"/><rect x="0" y="6.5" width="2.5" height="1.3" fill="#4497c0"/><rect x="13.5" y="4.3" width="2.3" height="1.3" fill="#4497c0"/></svg>
<div class="t" style="left:101px;top:652px">MONOSTABLE_TC</div>
<svg style="left:83px;top:654px" width="16" height="10" viewBox="0 0 16 10"><rect x="2.5" y="0.45" width="11" height="9.3" fill="none" stroke="#4497c0" stroke-width="0.9"/><rect x="4.3" y="2.4" width="7.6" height="1.4" fill="#4497c0"/><rect x="0" y="2.4" width="2.5" height="1.3" fill="#4497c0"/><rect x="0" y="6.5" width="2.5" height="1.3" fill="#4497c0"/><rect x="13.5" y="4.3" width="2.3" height="1.3" fill="#4497c0"/></svg>
<div class="t" style="left:101px;top:670px">SynopAgregateur</div>
<svg style="left:83px;top:672px" width="16" height="10" viewBox="0 0 16 10"><rect x="2.5" y="0.45" width="11" height="9.3" fill="none" stroke="#4497c0" stroke-width="0.9"/><rect x="4.3" y="2.4" width="7.6" height="1.4" fill="#4497c0"/><rect x="0" y="2.4" width="2.5" height="1.3" fill="#4497c0"/><rect x="0" y="6.5" width="2.5" height="1.3" fill="#4497c0"/><rect x="13.5" y="4.3" width="2.3" height="1.3" fill="#4497c0"/></svg>
<div class="t" style="left:101px;top:688px">TELECOMMANDE</div>
<svg style="left:83px;top:690px" width="16" height="10" viewBox="0 0 16 10"><rect x="2.5" y="0.45" width="11" height="9.3" fill="none" stroke="#4497c0" stroke-width="0.9"/><rect x="4.3" y="2.4" width="7.6" height="1.4" fill="#4497c0"/><rect x="0" y="2.4" width="2.5" height="1.3" fill="#4497c0"/><rect x="0" y="6.5" width="2.5" height="1.3" fill="#4497c0"/><rect x="13.5" y="4.3" width="2.3" height="1.3" fill="#4497c0"/></svg>
</div>
<svg style="left:1901px;top:102px" width="10" height="7" viewBox="0 0 10 7"><path d="M0 7L5.0 3L10 7V4L5.0 0L0 4z" fill="#333"/></svg>
<div class="abs" style="left:1903px;top:114px;width:6px;height:165px;background:#878787"></div>
<svg style="left:1901px;top:792px" width="10" height="7" viewBox="0 0 10 7"><path d="M0 0L5.0 4L10 0V3L5.0 7L0 3z" fill="#333"/></svg>
<div class="abs" style="left:1594px;top:804px;width:316px;height:1px;background:#3a3a3c"></div>
<div class="abs" style="left:1594px;top:805px;width:316px;height:1px;background:#f8f8f8"></div>
<div class="abs" style="left:1594px;top:806px;width:316px;height:25px;background:#ebeded"></div>
<div class="t" style="left:1633px;top:811px;font-weight:bold;color:#333">PLCnext Components &amp; Programs (1)</div>
<svg style="left:1600px;top:814px" width="6" height="8" viewBox="0 0 6 8"><path d="M0 0H2.9L6 4.0L2.9 8H0L3.1 4.0z" fill="#3a3a3a"/></svg>
<div class="abs" style="left:1594px;top:831px;width:316px;height:1px;background:#3a3a3c"></div>
<div class="abs" style="left:1594px;top:832px;width:316px;height:1px;background:#f8f8f8"></div>
<div class="abs" style="left:1594px;top:833px;width:316px;height:25px;background:#ebeded"></div>
<div class="t" style="left:1633px;top:838px;font-weight:bold;color:#333">Network (487)</div>
<svg style="left:1600px;top:841px" width="6" height="8" viewBox="0 0 6 8"><path d="M0 0H2.9L6 4.0L2.9 8H0L3.1 4.0z" fill="#3a3a3a"/></svg>
<div class="abs" style="left:1594px;top:858px;width:316px;height:1px;background:#3a3a3c"></div>
<div class="abs" style="left:1594px;top:859px;width:316px;height:1px;background:#f8f8f8"></div>
<div class="abs" style="left:1594px;top:860px;width:316px;height:25px;background:#ebeded"></div>
<div class="t" style="left:1633px;top:865px;font-weight:bold;color:#333">HMI (34)</div>
<svg style="left:1600px;top:868px" width="6" height="8" viewBox="0 0 6 8"><path d="M0 0H2.9L6 4.0L2.9 8H0L3.1 4.0z" fill="#3a3a3a"/></svg>
<div class="abs" style="left:1594px;top:885px;width:316px;height:1px;background:#3a3a3c"></div>
<div class="abs" style="left:1594px;top:886px;width:316px;height:1px;background:#f8f8f8"></div>
<div class="abs" style="left:1594px;top:887px;width:316px;height:25px;background:#ebeded"></div>
<div class="t" style="left:1633px;top:892px;font-weight:bold;color:#333">Libraries (10)</div>
<svg style="left:1600px;top:895px" width="6" height="8" viewBox="0 0 6 8"><path d="M0 0H2.9L6 4.0L2.9 8H0L3.1 4.0z" fill="#3a3a3a"/></svg>
<svg style="left:1615px;top:814px" width="14" height="11" viewBox="0 0 14 11"><rect x="0" y="0" width="6" height="1" fill="#4a9cc4"/><rect x="0" y="0.8" width="12.8" height="1.9" fill="#4a9cc4"/><rect x="0" y="0" width="1.05" height="11" fill="#4a9cc4"/><rect x="2.1" y="4.4" width="11.9" height="6.6" fill="#4a9cc4"/><rect x="0" y="9.8" width="14" height="1.2" fill="#4a9cc4"/></svg>
<svg style="left:1616px;top:837px" width="12" height="16" viewBox="0 0 12 16"><rect x="4.5" y="0" width="7.5" height="12" rx="1" fill="#4a9cc4"/><rect x="2.3" y="1.9" width="7.6" height="12" rx="1" fill="#4a9cc4" stroke="#ebeded" stroke-width="0.7"/><rect x="0" y="3.9" width="8" height="12.1" rx="1.2" fill="#4a9cc4" stroke="#ebeded" stroke-width="0.7"/><rect x="1.2" y="7.2" width="5.8" height="2" fill="#fff"/></svg>
<svg style="left:1614px;top:865px" width="17" height="15" viewBox="0 0 17 15"><path d="M8.5 0.5Q13 0.5 12.5 5Q14 9 12 12.5Q10 15 7.5 14.5Q4.5 14 4.5 10Q5 7 4.5 4Q5 0.5 8.5 0.5z" fill="#4a9cc4"/><path d="M3.5 2.5L1.5 5L3.5 6.5M14 2L15.5 4.5M3 8L0 11.5L3 15M14 8L17 11.5L14 15" fill="none" stroke="#4a9cc4" stroke-width="1.4"/><path d="M9 4.5L11 6.5M8 9L10 11M6.5 12.5L9 14" stroke="#ebeded" stroke-width="0.8"/></svg>
<svg style="left:1614px;top:891px" width="17" height="17" viewBox="0 0 17 17"><rect x="3" y="0" width="10" height="7" fill="#4a9cc4"/><rect x="5" y="2.5" width="6" height="1.3" fill="#fff"/><rect x="7" y="7" width="2" height="3" fill="#4a9cc4"/><circle cx="12" cy="11" r="3" fill="none" stroke="#4a9cc4" stroke-width="2.2"/><path d="M12 6.2V15.8M7.2 11H16.8M8.6 7.6L15.4 14.4M15.4 7.6L8.6 14.4" stroke="#4a9cc4" stroke-width="1.6"/><circle cx="12" cy="11" r="1.3" fill="#ebeded"/><circle cx="5" cy="11.5" r="5" fill="#d01f1f"/><path d="M3.2 9.7L6.8 13.3M6.8 9.7L3.2 13.3" stroke="#fff" stroke-width="1.3"/></svg>
<div class="abs" style="left:1594px;top:912px;width:316px;height:2px;background:#3f3f42"></div>
<div class="abs" style="left:1486px;top:913px;width:100px;height:1px;background:#9b1414"></div>
</body></html>
